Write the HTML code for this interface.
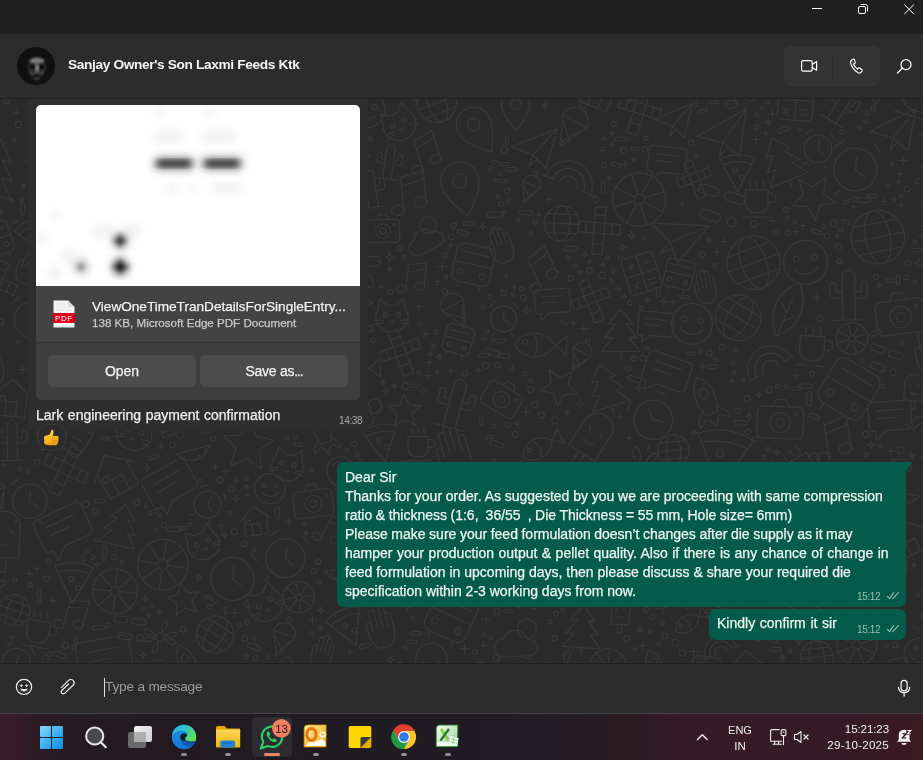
<!DOCTYPE html>
<html><head><meta charset="utf-8">
<style>
*{box-sizing:border-box;margin:0;padding:0}
html,body{width:923px;height:760px;overflow:hidden;background:#232323;font-family:"Liberation Sans",sans-serif;color:#fff}
.abs{position:absolute}
.name,.msg,.time,#composer~div,.tx{will-change:transform}
#title{left:0;top:0;width:923px;height:34px;background:#202020}
#header{left:0;top:34px;width:923px;height:64px;background:#2c2c2c}
#hline{left:0;top:98px;width:923px;height:1px;background:#202020}
#chat{left:0;top:99px;width:923px;height:564px;background:#2a2a2a;overflow:hidden}
#compline{left:0;top:663px;width:923px;height:1px;background:#1f1f1f}
#composer{left:0;top:664px;width:923px;height:49px;background:#2c2c2c}
#tbline{left:0;top:713px;width:923px;height:1px;background:#454347}
#taskbar{left:0;top:714px;width:923px;height:46px;background:linear-gradient(90deg,#3c1b28 0px,#2c1c24 40px,#221b21 100px,#1f1b22 450px,#221c24 560px,#2b1c22 620px,#361a26 680px,#361a25 850px,#3a1a23 923px)}
.name{left:68px;top:57px;font-size:13px;font-weight:700;color:#f4f4f4;white-space:nowrap}
.callgrp{left:784px;top:46px;width:96px;height:40px;border-radius:6px;background:#333333}
.divv{left:832px;top:54px;width:1px;height:24px;background:#2a2a2a}
.msg{will-change:transform;-webkit-text-stroke:0.25px currentColor;font-size:14px;line-height:19px;color:#f2f2f2;white-space:nowrap}
.time{will-change:transform;font-size:10px;letter-spacing:-0.35px;color:#9dbdb3;white-space:nowrap}
</style></head>
<body>
<div id="title" class="abs">
  <svg class="abs" style="left:0;top:0" width="923" height="34">
    <line x1="812" y1="8.5" x2="822" y2="8.5" stroke="#fff" stroke-width="1"/>
    <rect x="858.5" y="6.5" width="7" height="7" rx="1.5" fill="none" stroke="#fff" stroke-width="1"/>
    <path d="M860.5 4.5h5a2 2 0 0 1 2 2v5" fill="none" stroke="#fff" stroke-width="1"/>
    <path d="M904.3 4.6l9.6 9.4M913.9 4.6l-9.6 9.4" stroke="#fff" stroke-width="1"/>
  </svg>
</div>
<div id="header" class="abs">
  <svg class="abs" style="left:17px;top:13px" width="38" height="38" viewBox="0 0 38 38">
    <defs>
      <clipPath id="avc"><circle cx="19" cy="19" r="19"/></clipPath>
      <filter id="sb" x="-20%" y="-20%" width="140%" height="140%"><feGaussianBlur stdDeviation="1.1"/></filter>
    </defs>
    <circle cx="19" cy="19" r="19" fill="#101010"/>
    <g clip-path="url(#avc)" filter="url(#sb)">
      <ellipse cx="19.5" cy="21" rx="8.5" ry="11.5" fill="#262626"/>
      <ellipse cx="20" cy="13.6" rx="7.5" ry="2.6" fill="#7a7a7a"/>
      <ellipse cx="15.8" cy="19.8" rx="4.2" ry="3.6" fill="#0b0b0b" stroke="#3e3e3e" stroke-width="1.1"/>
      <ellipse cx="24.4" cy="19.8" rx="4.2" ry="3.6" fill="#0b0b0b" stroke="#3e3e3e" stroke-width="1.1"/>
      <path d="M20.1 17.5 L20.1 24.5" stroke="#a0a0a0" stroke-width="2"/>
      <path d="M13 24 q2 3 3 4 M27 24 q-2 3 -3 4" stroke="#5a5a5a" stroke-width="1.2" fill="none"/>
      <path d="M16 26.5 Q20 25 24 26.5" stroke="#6a6a6a" stroke-width="1" fill="none"/>
      <ellipse cx="20" cy="29" rx="4.5" ry="2.8" fill="#141414"/>
      <path d="M17.5 31.6 Q20 32.6 22.5 31.6" stroke="#5a5a5a" stroke-width="1.1" fill="none"/>
    </g>
  </svg>
  <div class="abs name" style="top:23px;font-size:13.7px;letter-spacing:-0.36px">Sanjay Owner's Son Laxmi Feeds Ktk</div>
</div>
<div class="abs callgrp"></div>
<div class="abs divv"></div>
<svg class="abs" style="left:790px;top:50px" width="130" height="32" viewBox="790 50 130 32">
  <rect x="801.6" y="60.6" width="10.6" height="10.6" rx="1.5" fill="none" stroke="#fff" stroke-width="1.2"/>
  <path d="M812.2 64.6 L816.6 61.6 V70.2 L812.2 67.4" fill="none" stroke="#fff" stroke-width="1.2" stroke-linejoin="round"/>
  <g transform="translate(856 66) scale(0.88) translate(-856 -66)"><path d="M852.3 58.6 c-1.6 0.5 -2.6 1.6 -2.4 3.4 c0.6 4.4 4.2 9.6 8.5 11.6 c1.4 0.7 3.1 0.3 3.9 -1.1 l0.6 -1 c0.3 -0.6 0.1 -1.2 -0.4 -1.6 l-2.2 -1.6 c-0.5 -0.4 -1.2 -0.3 -1.6 0.2 l-0.9 1 c-2.1 -1.2 -3.8 -3.5 -4.6 -5.8 l1.2 -0.6 c0.6 -0.3 0.9 -0.9 0.7 -1.5 l-0.8 -2.6 c-0.2 -0.6 -0.9 -0.9 -1.5 -0.7z" fill="none" stroke="#fff" stroke-width="1.35" stroke-linejoin="round"/></g>
  <circle cx="906" cy="64.6" r="5" fill="none" stroke="#fff" stroke-width="1.2"/>
  <path d="M902.4 68.2 L897.5 73" stroke="#fff" stroke-width="1.3" stroke-linecap="round"/>
</svg>
<div id="hline" class="abs"></div>
<div id="chat" class="abs"></div>
<!--PATTERN--><svg class="abs" style="left:0;top:99px" width="923" height="564" viewBox="0 0 923 564"><g fill="none" stroke="#373737" stroke-width="1.25" stroke-linecap="round" stroke-linejoin="round"><g transform="translate(519.1 538.2) rotate(-3) scale(1.36) translate(-20 -20)" stroke-width="0.95"><circle cx="26" cy="14" r="7"/><path d="M8 34a7 7 0 0 1 1-14 9 9 0 0 1 17 2 6 6 0 0 1 2 12z"/></g><g transform="translate(162.9 465.6) rotate(9) scale(1.68) translate(-20 -20)" stroke-width="0.77"><circle cx="20" cy="20" r="15"/><circle cx="20" cy="20" r="3"/><path d="M20 5v12M20 23v12M5 20h12M23 20h12M9 9l9 9M22 22l9 9M31 9l-9 9M18 22l-9 9"/></g><g transform="translate(70.6 163.3) rotate(3) scale(1.63) translate(-20 -20)" stroke-width="0.80"><path d="M4 20c6-9 18-11 26 0-8 11-20 9-26 0zM30 20l7-6v12z"/><circle cx="11" cy="18" r="1.5"/><path d="M17 14c2 4 2 8 0 12"/></g><g transform="translate(591.0 339.6) rotate(33) scale(1.71) translate(-20 -20)" stroke-width="0.76"><path d="M11 30V13a9 9 0 0 1 18 0v17zM18 30v8h4v-8M15 14l2 2M23 14l2 2M17 22c2 2 4 2 6 0"/></g><g transform="translate(572.8 75.1) rotate(23) scale(1.52) translate(-20 -20)" stroke-width="0.85"><path d="M4 28a16 16 0 0 1 32 0M9 28a11 11 0 0 1 22 0M14 28a6 6 0 0 1 12 0"/><path d="M2 28h8M30 28h8"/></g><g transform="translate(14.3 511.3) rotate(19) scale(1.05) translate(-20 -20)" stroke-width="1.24"><circle cx="20" cy="20" r="15"/><ellipse cx="20" cy="20" rx="7" ry="15"/><path d="M5 20h30M8 12h24M8 28h24"/></g><g transform="translate(263.3 -17.2) rotate(-3) scale(1.19) translate(-20 -20)" stroke-width="1.10"><path d="M4 20c6-9 18-11 26 0-8 11-20 9-26 0zM30 20l7-6v12z"/><circle cx="11" cy="18" r="1.5"/><path d="M17 14c2 4 2 8 0 12"/></g><g transform="translate(940.7 581.4) rotate(15) scale(1.22) translate(-20 -20)" stroke-width="1.06"><path d="M4 20c6-9 18-11 26 0-8 11-20 9-26 0zM30 20l7-6v12z"/><circle cx="11" cy="18" r="1.5"/><path d="M17 14c2 4 2 8 0 12"/></g><g transform="translate(201.2 154.6) rotate(4) scale(1.25) translate(-20 -20)" stroke-width="1.04"><path d="M16 36V8a4 4 0 0 1 8 0v28M16 22h-5a3 3 0 0 1-3-3v-5a2 2 0 0 1 4 0v4h4M24 18h4v-4a2 2 0 0 1 4 0v5a3 3 0 0 1-3 3h-5M10 36h20"/></g><g transform="translate(-3.7 393.7) rotate(-20) scale(1.05) translate(-20 -20)" stroke-width="1.23"><path d="M11 18a9 9 0 0 1 18 0zM11 18l9 19 9-19M14 22l10 10M26 22l-8 14"/><circle cx="20" cy="6" r="2"/></g><g transform="translate(432.6 572.1) rotate(-6) scale(1.73) translate(-20 -20)" stroke-width="0.75"><path d="M11 30V13a9 9 0 0 1 18 0v17zM18 30v8h4v-8M15 14l2 2M23 14l2 2M17 22c2 2 4 2 6 0"/></g><g transform="translate(171.1 387.6) rotate(-29) scale(1.45) translate(-20 -20)" stroke-width="0.89"><path d="M6 6h28a3 3 0 0 1 3 3v17a3 3 0 0 1-3 3H16l-8 7v-7H6a3 3 0 0 1-3-3V9a3 3 0 0 1 3-3zM10 13h20M10 19h14"/></g><g transform="translate(908.4 437.9) rotate(-26) scale(1.27) translate(-20 -20)" stroke-width="1.03"><path d="M5 19L20 6l15 13M9 16v18h22V16"/><rect x="16" y="23" width="8" height="11"/><rect x="11" y="19" width="4" height="4"/></g><g transform="translate(-9.5 260.8) rotate(-23) scale(1.57) translate(-20 -20)" stroke-width="0.83"><path d="M12 36c-4-3-6-8-6-13v-6a2 2 0 0 1 4 0v5V8a2 2 0 0 1 4 0v12V5a2 2 0 0 1 4 0v15V7a2 2 0 0 1 4 0v14v-8a2 2 0 0 1 4 0v11c0 6-3 10-6 12z"/></g><g transform="translate(410.9 95.2) rotate(-6) scale(1.45) translate(-20 -20)" stroke-width="0.90"><path d="M14 30V8l16-4v22"/><ellipse cx="10" cy="30" rx="4.5" ry="3.5"/><ellipse cx="26" cy="26" rx="4.5" ry="3.5"/><path d="M14 14l16-4"/></g><g transform="translate(360.2 578.0) rotate(-16) scale(1.31) translate(-20 -20)" stroke-width="0.99"><path d="M4 28a16 16 0 0 1 32 0M9 28a11 11 0 0 1 22 0M14 28a6 6 0 0 1 12 0"/><path d="M2 28h8M30 28h8"/></g><g transform="translate(753.7 163.7) rotate(-20) scale(1.78) translate(-20 -20)" stroke-width="0.73"><circle cx="20" cy="20" r="15"/><ellipse cx="20" cy="20" rx="7" ry="15"/><path d="M5 20h30M8 12h24M8 28h24"/></g><g transform="translate(802.8 367.7) rotate(-32) scale(1.32) translate(-20 -20)" stroke-width="0.99"><path d="M8 12h20v12a8 8 0 0 1-8 8h-4a8 8 0 0 1-8-8zM28 15h3a4 4 0 0 1 0 8h-3M12 4c-2 2 2 4 0 6M18 4c-2 2 2 4 0 6M24 4c-2 2 2 4 0 6M6 36h24"/></g><g transform="translate(405.2 -14.2) rotate(23) scale(1.12) translate(-20 -20)" stroke-width="1.16"><path d="M6 6h28a3 3 0 0 1 3 3v17a3 3 0 0 1-3 3H16l-8 7v-7H6a3 3 0 0 1-3-3V9a3 3 0 0 1 3-3zM10 13h20M10 19h14"/></g><g transform="translate(51.5 106.1) rotate(-34) scale(1.31) translate(-20 -20)" stroke-width="0.99"><circle cx="20" cy="22" r="13"/><path d="M20 14v8l6 4M6 10l5-5M34 10l-5-5M12 36l-3 3M28 36l3 3"/></g><g transform="translate(781.6 62.0) rotate(-22) scale(1.47) translate(-20 -20)" stroke-width="0.88"><path d="M20 3l-9 11h5l-8 10h6l-8 10h28l-8-10h6l-8-10h5zM20 34v5"/></g><g transform="translate(854.8 474.0) rotate(16) scale(1.12) translate(-20 -20)" stroke-width="1.16"><circle cx="20" cy="22" r="13"/><path d="M20 14v8l6 4M6 10l5-5M34 10l-5-5M12 36l-3 3M28 36l3 3"/></g><g transform="translate(353.8 271.4) rotate(-5) scale(1.55) translate(-20 -20)" stroke-width="0.84"><path d="M4 20c6-9 18-11 26 0-8 11-20 9-26 0zM30 20l7-6v12z"/><circle cx="11" cy="18" r="1.5"/><path d="M17 14c2 4 2 8 0 12"/></g><g transform="translate(17.3 561.5) rotate(17) scale(1.08) translate(-20 -20)" stroke-width="1.20"><circle cx="20" cy="22" r="13"/><path d="M20 14v8l6 4M6 10l5-5M34 10l-5-5M12 36l-3 3M28 36l3 3"/></g><g transform="translate(385.2 526.5) rotate(-14) scale(1.31) translate(-20 -20)" stroke-width="0.99"><path d="M12 36c-4-3-6-8-6-13v-6a2 2 0 0 1 4 0v5V8a2 2 0 0 1 4 0v12V5a2 2 0 0 1 4 0v15V7a2 2 0 0 1 4 0v14v-8a2 2 0 0 1 4 0v11c0 6-3 10-6 12z"/></g><g transform="translate(673.7 21.5) rotate(-1) scale(1.14) translate(-20 -20)" stroke-width="1.14"><path d="M3 19L37 5 29 35 19 25zM19 25l-3 9 6-6M19 25L37 5"/></g><g transform="translate(573.1 24.8) rotate(29) scale(1.52) translate(-20 -20)" stroke-width="0.85"><path d="M11 18a9 9 0 0 1 18 0zM11 18l9 19 9-19M14 22l10 10M26 22l-8 14"/><circle cx="20" cy="6" r="2"/></g><g transform="translate(-4.0 142.6) rotate(-18) scale(1.16) translate(-20 -20)" stroke-width="1.12"><rect x="6" y="4" width="28" height="28" rx="5"/><path d="M6 18h28M10 10h20M12 32v4M28 32v4"/><circle cx="12" cy="25" r="2"/><circle cx="28" cy="25" r="2"/></g><g transform="translate(251.5 300.7) rotate(-29) scale(1.04) translate(-20 -20)" stroke-width="1.25"><path d="M14 30V8l16-4v22"/><ellipse cx="10" cy="30" rx="4.5" ry="3.5"/><ellipse cx="26" cy="26" rx="4.5" ry="3.5"/><path d="M14 14l16-4"/></g><g transform="translate(413.7 179.9) rotate(6) scale(1.11) translate(-20 -20)" stroke-width="1.17"><path d="M14 30V8l16-4v22"/><ellipse cx="10" cy="30" rx="4.5" ry="3.5"/><ellipse cx="26" cy="26" rx="4.5" ry="3.5"/><path d="M14 14l16-4"/></g><g transform="translate(12.3 341.4) rotate(-1) scale(1.25) translate(-20 -20)" stroke-width="1.04"><path d="M16 36V8a4 4 0 0 1 8 0v28M16 22h-5a3 3 0 0 1-3-3v-5a2 2 0 0 1 4 0v4h4M24 18h4v-4a2 2 0 0 1 4 0v5a3 3 0 0 1-3 3h-5M10 36h20"/></g><g transform="translate(287.1 583.6) rotate(-3) scale(1.58) translate(-20 -20)" stroke-width="0.82"><path d="M16 36V8a4 4 0 0 1 8 0v28M16 22h-5a3 3 0 0 1-3-3v-5a2 2 0 0 1 4 0v4h4M24 18h4v-4a2 2 0 0 1 4 0v5a3 3 0 0 1-3 3h-5M10 36h20"/></g><g transform="translate(104.8 561.9) rotate(-10) scale(1.59) translate(-20 -20)" stroke-width="0.82"><path d="M6 6h28a3 3 0 0 1 3 3v17a3 3 0 0 1-3 3H16l-8 7v-7H6a3 3 0 0 1-3-3V9a3 3 0 0 1 3-3zM10 13h20M10 19h14"/></g><g transform="translate(741.3 501.5) rotate(9) scale(1.33) translate(-20 -20)" stroke-width="0.97"><path d="M4 28a16 16 0 0 1 32 0M9 28a11 11 0 0 1 22 0M14 28a6 6 0 0 1 12 0"/><path d="M2 28h8M30 28h8"/></g><g transform="translate(541.1 347.8) rotate(-29) scale(1.31) translate(-20 -20)" stroke-width="1.00"><path d="M4 20c6-9 18-11 26 0-8 11-20 9-26 0zM30 20l7-6v12z"/><circle cx="11" cy="18" r="1.5"/><path d="M17 14c2 4 2 8 0 12"/></g><g transform="translate(227.7 231.4) rotate(-8) scale(1.09) translate(-20 -20)" stroke-width="1.19"><path d="M6 6h28a3 3 0 0 1 3 3v17a3 3 0 0 1-3 3H16l-8 7v-7H6a3 3 0 0 1-3-3V9a3 3 0 0 1 3-3zM10 13h20M10 19h14"/></g><g transform="translate(539.5 246.1) rotate(1) scale(1.59) translate(-20 -20)" stroke-width="0.82"><path d="M4 20c6-9 18-11 26 0-8 11-20 9-26 0zM30 20l7-6v12z"/><circle cx="11" cy="18" r="1.5"/><path d="M17 14c2 4 2 8 0 12"/></g><g transform="translate(278.8 33.0) rotate(-19) scale(1.41) translate(-20 -20)" stroke-width="0.92"><circle cx="20" cy="20" r="15"/><ellipse cx="20" cy="20" rx="7" ry="15"/><path d="M5 20h30M8 12h24M8 28h24"/></g><g transform="translate(458.9 351.2) rotate(-17) scale(1.56) translate(-20 -20)" stroke-width="0.83"><path d="M12 36c-4-3-6-8-6-13v-6a2 2 0 0 1 4 0v5V8a2 2 0 0 1 4 0v12V5a2 2 0 0 1 4 0v15V7a2 2 0 0 1 4 0v14v-8a2 2 0 0 1 4 0v11c0 6-3 10-6 12z"/></g><g transform="translate(269.9 389.6) rotate(1) scale(1.01) translate(-20 -20)" stroke-width="1.29"><circle cx="20" cy="20" r="15"/><circle cx="14" cy="17" r="2"/><circle cx="26" cy="17" r="2"/><path d="M12 24c4 5 12 5 16 0"/></g><g transform="translate(590.7 465.4) rotate(27) scale(1.20) translate(-20 -20)" stroke-width="1.08"><circle cx="20" cy="20" r="15"/><circle cx="14" cy="17" r="2"/><circle cx="26" cy="17" r="2"/><path d="M12 24c4 5 12 5 16 0"/></g><g transform="translate(541.5 171.2) rotate(-26) scale(1.31) translate(-20 -20)" stroke-width="0.99"><path d="M14 30V8l16-4v22"/><ellipse cx="10" cy="30" rx="4.5" ry="3.5"/><ellipse cx="26" cy="26" rx="4.5" ry="3.5"/><path d="M14 14l16-4"/></g><g transform="translate(842.5 4.5) rotate(32) scale(1.28) translate(-20 -20)" stroke-width="1.02"><path d="M16 36V8a4 4 0 0 1 8 0v28M16 22h-5a3 3 0 0 1-3-3v-5a2 2 0 0 1 4 0v4h4M24 18h4v-4a2 2 0 0 1 4 0v5a3 3 0 0 1-3 3h-5M10 36h20"/></g><g transform="translate(142.9 252.2) rotate(30) scale(1.22) translate(-20 -20)" stroke-width="1.06"><path d="M20 4l4.5 10 10.5 1-8 7 2.5 11L20 27.5 10.5 33 13 22l-8-7 10.5-1z"/></g><g transform="translate(669.8 488.5) rotate(-13) scale(1.54) translate(-20 -20)" stroke-width="0.85"><rect x="6" y="4" width="28" height="28" rx="5"/><path d="M6 18h28M10 10h20M12 32v4M28 32v4"/><circle cx="12" cy="25" r="2"/><circle cx="28" cy="25" r="2"/></g><g transform="translate(247.8 347.0) rotate(5) scale(1.66) translate(-20 -20)" stroke-width="0.78"><path d="M20 4l4.5 10 10.5 1-8 7 2.5 11L20 27.5 10.5 33 13 22l-8-7 10.5-1z"/></g><g transform="translate(742.2 -8.5) rotate(-7) scale(1.25) translate(-20 -20)" stroke-width="1.04"><path d="M14 30V8l16-4v22"/><ellipse cx="10" cy="30" rx="4.5" ry="3.5"/><ellipse cx="26" cy="26" rx="4.5" ry="3.5"/><path d="M14 14l16-4"/></g><g transform="translate(747.4 574.3) rotate(-4) scale(1.62) translate(-20 -20)" stroke-width="0.80"><path d="M5 19L20 6l15 13M9 16v18h22V16"/><rect x="16" y="23" width="8" height="11"/><rect x="11" y="19" width="4" height="4"/></g><g transform="translate(639.2 100.4) rotate(-17) scale(1.77) translate(-20 -20)" stroke-width="0.74"><circle cx="20" cy="20" r="15"/><circle cx="20" cy="20" r="3"/><path d="M20 5v12M20 23v12M5 20h12M23 20h12M9 9l9 9M22 22l9 9M31 9l-9 9M18 22l-9 9"/></g><g transform="translate(707.1 303.0) rotate(-22) scale(1.57) translate(-20 -20)" stroke-width="0.83"><path d="M20 3c7 6 8 16 4 25h-8c-4-9-3-19 4-25z"/><circle cx="20" cy="14" r="3"/><path d="M16 24l-6 6v4l6-4M24 24l6 6v4l-6-4M17 31l3 6 3-6"/></g><g transform="translate(312.9 401.2) rotate(-7) scale(1.22) translate(-20 -20)" stroke-width="1.07"><rect x="4" y="12" width="32" height="22" rx="4"/><circle cx="20" cy="23" r="7"/><circle cx="20" cy="23" r="3"/><path d="M14 12l3-5h6l3 5"/><circle cx="31" cy="17" r="1"/></g><g transform="translate(582.4 529.6) rotate(4) scale(1.36) translate(-20 -20)" stroke-width="0.95"><path d="M20 3l-9 11h5l-8 10h6l-8 10h28l-8-10h6l-8-10h5zM20 34v5"/></g><g transform="translate(464.1 474.9) rotate(-3) scale(1.52) translate(-20 -20)" stroke-width="0.85"><path d="M6 6h28a3 3 0 0 1 3 3v17a3 3 0 0 1-3 3H16l-8 7v-7H6a3 3 0 0 1-3-3V9a3 3 0 0 1 3-3zM10 13h20M10 19h14"/></g><g transform="translate(597.9 413.5) rotate(-18) scale(1.65) translate(-20 -20)" stroke-width="0.79"><path d="M11 18a9 9 0 0 1 18 0zM11 18l9 19 9-19M14 22l10 10M26 22l-8 14"/><circle cx="20" cy="6" r="2"/></g><g transform="translate(877.8 138.2) rotate(-11) scale(1.78) translate(-20 -20)" stroke-width="0.73"><circle cx="20" cy="20" r="15"/><ellipse cx="20" cy="20" rx="7" ry="15"/><path d="M5 20h30M8 12h24M8 28h24"/></g><g transform="translate(404.6 312.4) rotate(-1) scale(1.07) translate(-20 -20)" stroke-width="1.22"><path d="M20 4l4.5 10 10.5 1-8 7 2.5 11L20 27.5 10.5 33 13 22l-8-7 10.5-1z"/></g><g transform="translate(146.5 182.3) rotate(-2) scale(1.64) translate(-20 -20)" stroke-width="0.79"><path d="M14 30V8l16-4v22"/><ellipse cx="10" cy="30" rx="4.5" ry="3.5"/><ellipse cx="26" cy="26" rx="4.5" ry="3.5"/><path d="M14 14l16-4"/></g><g transform="translate(847.2 293.0) rotate(31) scale(1.80) translate(-20 -20)" stroke-width="0.72"><rect x="6" y="4" width="28" height="28" rx="5"/><path d="M6 18h28M10 10h20M12 32v4M28 32v4"/><circle cx="12" cy="25" r="2"/><circle cx="28" cy="25" r="2"/></g><g transform="translate(894.0 32.0) rotate(-4) scale(1.39) translate(-20 -20)" stroke-width="0.93"><path d="M3 19L37 5 29 35 19 25zM19 25l-3 9 6-6M19 25L37 5"/></g><g transform="translate(780.4 319.2) rotate(2) scale(1.45) translate(-20 -20)" stroke-width="0.90"><rect x="4" y="12" width="32" height="22" rx="4"/><circle cx="20" cy="23" r="7"/><circle cx="20" cy="23" r="3"/><path d="M14 12l3-5h6l3 5"/><circle cx="31" cy="17" r="1"/></g><g transform="translate(794.0 523.9) rotate(-14) scale(1.30) translate(-20 -20)" stroke-width="1.00"><path d="M11 18a9 9 0 0 1 18 0zM11 18l9 19 9-19M14 22l10 10M26 22l-8 14"/><circle cx="20" cy="6" r="2"/></g><g transform="translate(504.6 144.9) rotate(-21) scale(1.11) translate(-20 -20)" stroke-width="1.17"><path d="M12 36c-4-3-6-8-6-13v-6a2 2 0 0 1 4 0v5V8a2 2 0 0 1 4 0v12V5a2 2 0 0 1 4 0v15V7a2 2 0 0 1 4 0v14v-8a2 2 0 0 1 4 0v11c0 6-3 10-6 12z"/></g><g transform="translate(913.5 291.7) rotate(3) scale(1.02) translate(-20 -20)" stroke-width="1.27"><path d="M11 30V13a9 9 0 0 1 18 0v17zM18 30v8h4v-8M15 14l2 2M23 14l2 2M17 22c2 2 4 2 6 0"/></g><g transform="translate(97.4 36.3) rotate(-30) scale(1.79) translate(-20 -20)" stroke-width="0.73"><rect x="4" y="12" width="32" height="22" rx="4"/><circle cx="20" cy="23" r="7"/><circle cx="20" cy="23" r="3"/><path d="M14 12l3-5h6l3 5"/><circle cx="31" cy="17" r="1"/></g><g transform="translate(397.6 472.7) rotate(2) scale(1.10) translate(-20 -20)" stroke-width="1.18"><circle cx="20" cy="20" r="15"/><circle cx="20" cy="20" r="3"/><path d="M20 5v12M20 23v12M5 20h12M23 20h12M9 9l9 9M22 22l9 9M31 9l-9 9M18 22l-9 9"/></g><g transform="translate(656.1 570.3) rotate(-21) scale(1.21) translate(-20 -20)" stroke-width="1.08"><path d="M20 3c7 6 8 16 4 25h-8c-4-9-3-19 4-25z"/><circle cx="20" cy="14" r="3"/><path d="M16 24l-6 6v4l6-4M24 24l6 6v4l-6-4M17 31l3 6 3-6"/></g><g transform="translate(641.6 174.5) rotate(-18) scale(1.18) translate(-20 -20)" stroke-width="1.10"><rect x="6" y="4" width="28" height="32" rx="4"/><path d="M20 4v32M6 20h28M10 12h6M13 9v6M24 12h6M10 27l5 5M15 27l-5 5M24 27h6M24 31h6"/></g><g transform="translate(188.2 307.9) rotate(-19) scale(1.17) translate(-20 -20)" stroke-width="1.11"><path d="M14 30V8l16-4v22"/><ellipse cx="10" cy="30" rx="4.5" ry="3.5"/><ellipse cx="26" cy="26" rx="4.5" ry="3.5"/><path d="M14 14l16-4"/></g><g transform="translate(283.3 537.4) rotate(19) scale(1.25) translate(-20 -20)" stroke-width="1.04"><path d="M11 18a9 9 0 0 1 18 0zM11 18l9 19 9-19M14 22l10 10M26 22l-8 14"/><circle cx="20" cy="6" r="2"/></g><g transform="translate(73.3 516.9) rotate(16) scale(1.16) translate(-20 -20)" stroke-width="1.12"><path d="M14 30V8l16-4v22"/><ellipse cx="10" cy="30" rx="4.5" ry="3.5"/><ellipse cx="26" cy="26" rx="4.5" ry="3.5"/><path d="M14 14l16-4"/></g><g transform="translate(73.4 482.6) rotate(3) scale(1.21) translate(-20 -20)" stroke-width="1.08"><path d="M4 8c10-5 22-5 32 0L20 38zM7 13c8-3 18-3 26 0"/><circle cx="18" cy="18" r="2"/><circle cx="24" cy="25" r="2"/></g><g transform="translate(72.5 324.2) rotate(29) scale(1.64) translate(-20 -20)" stroke-width="0.79"><rect x="6" y="4" width="28" height="32" rx="4"/><path d="M20 4v32M6 20h28M10 12h6M13 9v6M24 12h6M10 27l5 5M15 27l-5 5M24 27h6M24 31h6"/></g><g transform="translate(47.9 44.1) rotate(18) scale(1.15) translate(-20 -20)" stroke-width="1.13"><path d="M20 3c7 6 8 16 4 25h-8c-4-9-3-19 4-25z"/><circle cx="20" cy="14" r="3"/><path d="M16 24l-6 6v4l6-4M24 24l6 6v4l-6-4M17 31l3 6 3-6"/></g><g transform="translate(90.7 84.2) rotate(34) scale(1.15) translate(-20 -20)" stroke-width="1.13"><rect x="4" y="12" width="32" height="22" rx="4"/><circle cx="20" cy="23" r="7"/><circle cx="20" cy="23" r="3"/><path d="M14 12l3-5h6l3 5"/><circle cx="31" cy="17" r="1"/></g><g transform="translate(692.0 224.8) rotate(7) scale(1.36) translate(-20 -20)" stroke-width="0.95"><circle cx="20" cy="20" r="15"/><circle cx="14" cy="17" r="2"/><circle cx="26" cy="17" r="2"/><path d="M12 24c4 5 12 5 16 0"/></g><g transform="translate(297.7 305.5) rotate(19) scale(1.11) translate(-20 -20)" stroke-width="1.17"><path d="M20 37c-7-9-11-15-11-21a11 11 0 0 1 22 0c0 6-4 12-11 21z"/><circle cx="20" cy="16" r="4"/></g><g transform="translate(370.7 416.5) rotate(21) scale(1.61) translate(-20 -20)" stroke-width="0.81"><path d="M16 36V8a4 4 0 0 1 8 0v28M16 22h-5a3 3 0 0 1-3-3v-5a2 2 0 0 1 4 0v4h4M24 18h4v-4a2 2 0 0 1 4 0v5a3 3 0 0 1-3 3h-5M10 36h20"/></g><g transform="translate(371.1 89.9) rotate(-8) scale(1.17) translate(-20 -20)" stroke-width="1.11"><path d="M16 36V8a4 4 0 0 1 8 0v28M16 22h-5a3 3 0 0 1-3-3v-5a2 2 0 0 1 4 0v4h4M24 18h4v-4a2 2 0 0 1 4 0v5a3 3 0 0 1-3 3h-5M10 36h20"/></g><g transform="translate(923.8 -6.2) rotate(17) scale(1.61) translate(-20 -20)" stroke-width="0.81"><path d="M8 12h20v12a8 8 0 0 1-8 8h-4a8 8 0 0 1-8-8zM28 15h3a4 4 0 0 1 0 8h-3M12 4c-2 2 2 4 0 6M18 4c-2 2 2 4 0 6M24 4c-2 2 2 4 0 6M6 36h24"/></g><g transform="translate(366.7 10.5) rotate(10) scale(1.21) translate(-20 -20)" stroke-width="1.08"><circle cx="20" cy="20" r="15"/><circle cx="14" cy="17" r="2"/><circle cx="26" cy="17" r="2"/><path d="M12 24c4 5 12 5 16 0"/></g><g transform="translate(900.0 213.4) rotate(-8) scale(1.53) translate(-20 -20)" stroke-width="0.85"><rect x="4" y="12" width="32" height="22" rx="4"/><circle cx="20" cy="23" r="7"/><circle cx="20" cy="23" r="3"/><path d="M14 12l3-5h6l3 5"/><circle cx="31" cy="17" r="1"/></g><g transform="translate(363.8 168.7) rotate(-1) scale(1.23) translate(-20 -20)" stroke-width="1.06"><path d="M8 36v-8c-4-2-5-8-2-11l4-3V8a6 6 0 0 1 12 0v3h8a4 4 0 0 1 0 8h-8v5c4 2 6 6 6 12M12 36h4M22 36h4"/><circle cx="16" cy="8" r="1"/><path d="M30 15h4"/></g><g transform="translate(875.1 380.8) rotate(-33) scale(1.22) translate(-20 -20)" stroke-width="1.07"><path d="M8 36v-8c-4-2-5-8-2-11l4-3V8a6 6 0 0 1 12 0v3h8a4 4 0 0 1 0 8h-8v5c4 2 6 6 6 12M12 36h4M22 36h4"/><circle cx="16" cy="8" r="1"/><path d="M30 15h4"/></g><g transform="translate(639.0 11.9) rotate(17) scale(1.33) translate(-20 -20)" stroke-width="0.98"><path d="M4 14h32v8H4zM16 2v36h8V2zM10 14v8M30 14v8M16 8h8M16 30h8"/></g><g transform="translate(852.0 239.4) rotate(-17) scale(1.06) translate(-20 -20)" stroke-width="1.23"><circle cx="20" cy="20" r="15"/><circle cx="20" cy="20" r="3"/><path d="M20 5v12M20 23v12M5 20h12M23 20h12M9 9l9 9M22 22l9 9M31 9l-9 9M18 22l-9 9"/></g><g transform="translate(855.8 67.2) rotate(7) scale(1.65) translate(-20 -20)" stroke-width="0.79"><circle cx="20" cy="22" r="13"/><path d="M20 14v8l6 4M6 10l5-5M34 10l-5-5M12 36l-3 3M28 36l3 3"/></g><g transform="translate(581.2 255.2) rotate(25) scale(1.09) translate(-20 -20)" stroke-width="1.19"><path d="M11 18a9 9 0 0 1 18 0zM11 18l9 19 9-19M14 22l10 10M26 22l-8 14"/><circle cx="20" cy="6" r="2"/></g><g transform="translate(381.5 343.0) rotate(-10) scale(1.11) translate(-20 -20)" stroke-width="1.17"><path d="M4 8c10-5 22-5 32 0L20 38zM7 13c8-3 18-3 26 0"/><circle cx="18" cy="18" r="2"/><circle cx="24" cy="25" r="2"/></g><g transform="translate(104.1 270.6) rotate(20) scale(1.23) translate(-20 -20)" stroke-width="1.06"><path d="M20 4c7 0 11 5 11 11 0 8-6 13-11 14-5-1-11-6-11-14 0-6 4-11 11-11zM20 29l-2 3h4zM20 32c-3 3 3 5 0 8"/><path d="M14 12c1-3 3-4 5-4"/></g><g transform="translate(325.9 144.0) rotate(9) scale(1.50) translate(-20 -20)" stroke-width="0.87"><circle cx="20" cy="20" r="15"/><circle cx="14" cy="17" r="2"/><circle cx="26" cy="17" r="2"/><path d="M12 24c4 5 12 5 16 0"/></g><g transform="translate(162.8 130.4) rotate(27) scale(1.60) translate(-20 -20)" stroke-width="0.81"><circle cx="20" cy="20" r="15"/><circle cx="14" cy="17" r="2"/><circle cx="26" cy="17" r="2"/><path d="M12 24c4 5 12 5 16 0"/></g><g transform="translate(720.3 108.8) rotate(17) scale(1.50) translate(-20 -20)" stroke-width="0.87"><rect x="2" y="8" width="14" height="6" rx="3"/><rect x="20" y="8" width="14" height="6" rx="3"/><rect x="8" y="24" width="14" height="6" rx="3"/><circle cx="30" cy="27" r="3"/></g><g transform="translate(765.1 260.0) rotate(-30) scale(1.45) translate(-20 -20)" stroke-width="0.89"><path d="M4 28a16 16 0 0 1 32 0M9 28a11 11 0 0 1 22 0M14 28a6 6 0 0 1 12 0"/><path d="M2 28h8M30 28h8"/></g><g transform="translate(678.2 399.2) rotate(27) scale(1.24) translate(-20 -20)" stroke-width="1.05"><path d="M8 36v-8c-4-2-5-8-2-11l4-3V8a6 6 0 0 1 12 0v3h8a4 4 0 0 1 0 8h-8v5c4 2 6 6 6 12M12 36h4M22 36h4"/><circle cx="16" cy="8" r="1"/><path d="M30 15h4"/></g><g transform="translate(290.5 246.4) rotate(-4) scale(1.73) translate(-20 -20)" stroke-width="0.75"><path d="M20 4l4.5 10 10.5 1-8 7 2.5 11L20 27.5 10.5 33 13 22l-8-7 10.5-1z"/></g><g transform="translate(273.5 171.8) rotate(33) scale(1.64) translate(-20 -20)" stroke-width="0.79"><path d="M11 30V13a9 9 0 0 1 18 0v17zM18 30v8h4v-8M15 14l2 2M23 14l2 2M17 22c2 2 4 2 6 0"/></g><g transform="translate(477.1 30.9) rotate(-33) scale(1.58) translate(-20 -20)" stroke-width="0.82"><path d="M20 37c-7-9-11-15-11-21a11 11 0 0 1 22 0c0 6-4 12-11 21z"/><circle cx="20" cy="16" r="4"/></g><g transform="translate(543.2 460.9) rotate(21) scale(1.54) translate(-20 -20)" stroke-width="0.84"><path d="M20 37c-7-9-11-15-11-21a11 11 0 0 1 22 0c0 6-4 12-11 21z"/><circle cx="20" cy="16" r="4"/></g><g transform="translate(689.8 523.0) rotate(-33) scale(1.07) translate(-20 -20)" stroke-width="1.22"><path d="M4 20c6-9 18-11 26 0-8 11-20 9-26 0zM30 20l7-6v12z"/><circle cx="11" cy="18" r="1.5"/><path d="M17 14c2 4 2 8 0 12"/></g><g transform="translate(665.9 275.4) rotate(19) scale(1.34) translate(-20 -20)" stroke-width="0.97"><path d="M6 6h28a3 3 0 0 1 3 3v17a3 3 0 0 1-3 3H16l-8 7v-7H6a3 3 0 0 1-3-3V9a3 3 0 0 1 3-3zM10 13h20M10 19h14"/></g><g transform="translate(455.4 304.6) rotate(15) scale(1.54) translate(-20 -20)" stroke-width="0.85"><path d="M16 36V8a4 4 0 0 1 8 0v28M16 22h-5a3 3 0 0 1-3-3v-5a2 2 0 0 1 4 0v4h4M24 18h4v-4a2 2 0 0 1 4 0v5a3 3 0 0 1-3 3h-5M10 36h20"/></g><g transform="translate(801.9 466.8) rotate(27) scale(1.53) translate(-20 -20)" stroke-width="0.85"><path d="M4 20c6-9 18-11 26 0-8 11-20 9-26 0zM30 20l7-6v12z"/><circle cx="11" cy="18" r="1.5"/><path d="M17 14c2 4 2 8 0 12"/></g><g transform="translate(120.8 427.7) rotate(13) scale(1.34) translate(-20 -20)" stroke-width="0.97"><path d="M20 3l-9 11h5l-8 10h6l-8 10h28l-8-10h6l-8-10h5zM20 34v5"/></g><g transform="translate(857.0 546.2) rotate(25) scale(1.32) translate(-20 -20)" stroke-width="0.98"><circle cx="20" cy="20" r="15"/><circle cx="20" cy="20" r="3"/><path d="M20 5v12M20 23v12M5 20h12M23 20h12M9 9l9 9M22 22l9 9M31 9l-9 9M18 22l-9 9"/></g><g transform="translate(723.1 35.8) rotate(-7) scale(1.53) translate(-20 -20)" stroke-width="0.85"><path d="M3 19L37 5 29 35 19 25zM19 25l-3 9 6-6M19 25L37 5"/></g><g transform="translate(745.3 447.6) rotate(11) scale(1.78) translate(-20 -20)" stroke-width="0.73"><path d="M7 14l2-10 7 6h8l7-6 2 10c3 4 3 10 0 14-3 5-8 7-13 7s-10-2-13-7c-3-4-3-10 0-14z"/><circle cx="14" cy="19" r="2"/><circle cx="26" cy="19" r="2"/><path d="M18 25l2 2 2-2M4 24h8M4 28l8-2M36 24h-8M36 28l-8-2"/></g><g transform="translate(131.5 74.8) rotate(-25) scale(1.48) translate(-20 -20)" stroke-width="0.88"><path d="M4 14h32v8H4zM16 2v36h8V2zM10 14v8M30 14v8M16 8h8M16 30h8"/></g><g transform="translate(530.7 87.7) rotate(22) scale(1.04) translate(-20 -20)" stroke-width="1.25"><path d="M11 18a9 9 0 0 1 18 0zM11 18l9 19 9-19M14 22l10 10M26 22l-8 14"/><circle cx="20" cy="6" r="2"/></g><g transform="translate(805.6 163.4) rotate(-6) scale(1.47) translate(-20 -20)" stroke-width="0.88"><circle cx="20" cy="20" r="15"/><circle cx="14" cy="17" r="2"/><circle cx="26" cy="17" r="2"/><path d="M12 24c4 5 12 5 16 0"/></g><g transform="translate(503.3 297.5) rotate(31) scale(1.17) translate(-20 -20)" stroke-width="1.11"><rect x="4" y="12" width="32" height="22" rx="4"/><circle cx="20" cy="23" r="7"/><circle cx="20" cy="23" r="3"/><path d="M14 12l3-5h6l3 5"/><circle cx="31" cy="17" r="1"/></g><g transform="translate(940.4 383.0) rotate(-10) scale(1.45) translate(-20 -20)" stroke-width="0.90"><path d="M16 36V8a4 4 0 0 1 8 0v28M16 22h-5a3 3 0 0 1-3-3v-5a2 2 0 0 1 4 0v4h4M24 18h4v-4a2 2 0 0 1 4 0v5a3 3 0 0 1-3 3h-5M10 36h20"/></g><g transform="translate(81.8 218.1) rotate(17) scale(1.55) translate(-20 -20)" stroke-width="0.84"><circle cx="26" cy="14" r="7"/><path d="M8 34a7 7 0 0 1 1-14 9 9 0 0 1 17 2 6 6 0 0 1 2 12z"/></g><g transform="translate(793.3 414.4) rotate(-15) scale(1.68) translate(-20 -20)" stroke-width="0.77"><circle cx="20" cy="20" r="4"/><path d="M20 16c-3-6-3-10 0-12 3 2 3 6 0 12M24 20c6-3 10-3 12 0-2 3-6 3-12 0M20 24c3 6 3 10 0 12-3-2-3-6 0-12M16 20c-6 3-10 3-12 0 2-3 6-3 12 0M23 17c4-5 7-7 10-6 0 3-3 6-10 6M17 23c-4 5-7 7-10 6 0-3 3-6 10-6"/></g><g transform="translate(890.1 319.9) rotate(-4) scale(1.26) translate(-20 -20)" stroke-width="1.03"><path d="M6 6h28a3 3 0 0 1 3 3v17a3 3 0 0 1-3 3H16l-8 7v-7H6a3 3 0 0 1-3-3V9a3 3 0 0 1 3-3zM10 13h20M10 19h14"/></g><g transform="translate(177.9 69.4) rotate(-1) scale(1.11) translate(-20 -20)" stroke-width="1.17"><path d="M20 3l-9 11h5l-8 10h6l-8 10h28l-8-10h6l-8-10h5zM20 34v5"/></g><g transform="translate(285.9 456.4) rotate(11) scale(1.49) translate(-20 -20)" stroke-width="0.87"><circle cx="20" cy="22" r="13"/><path d="M20 14v8l6 4M6 10l5-5M34 10l-5-5M12 36l-3 3M28 36l3 3"/></g><g transform="translate(425.9 54.9) rotate(-18) scale(1.29) translate(-20 -20)" stroke-width="1.01"><path d="M14 30V8l16-4v22"/><ellipse cx="10" cy="30" rx="4.5" ry="3.5"/><ellipse cx="26" cy="26" rx="4.5" ry="3.5"/><path d="M14 14l16-4"/></g><g transform="translate(941.9 63.5) rotate(8) scale(1.74) translate(-20 -20)" stroke-width="0.75"><path d="M20 3l-9 11h5l-8 10h6l-8 10h28l-8-10h6l-8-10h5zM20 34v5"/></g><g transform="translate(11.8 298.8) rotate(5) scale(1.33) translate(-20 -20)" stroke-width="0.98"><path d="M5 19L20 6l15 13M9 16v18h22V16"/><rect x="16" y="23" width="8" height="11"/><rect x="11" y="19" width="4" height="4"/></g><g transform="translate(30.0 399.7) rotate(3) scale(1.32) translate(-20 -20)" stroke-width="0.99"><circle cx="20" cy="22" r="13"/><path d="M20 14v8l6 4M6 10l5-5M34 10l-5-5M12 36l-3 3M28 36l3 3"/></g><g transform="translate(885.5 511.4) rotate(26) scale(1.53) translate(-20 -20)" stroke-width="0.85"><path d="M20 37c-7-9-11-15-11-21a11 11 0 0 1 22 0c0 6-4 12-11 21z"/><circle cx="20" cy="16" r="4"/></g><g transform="translate(323.3 333.6) rotate(-14) scale(1.32) translate(-20 -20)" stroke-width="0.99"><path d="M20 3c7 6 8 16 4 25h-8c-4-9-3-19 4-25z"/><circle cx="20" cy="14" r="3"/><path d="M16 24l-6 6v4l6-4M24 24l6 6v4l-6-4M17 31l3 6 3-6"/></g><g transform="translate(652.1 318.1) rotate(-22) scale(1.51) translate(-20 -20)" stroke-width="0.86"><circle cx="20" cy="22" r="13"/><path d="M20 14v8l6 4M6 10l5-5M34 10l-5-5M12 36l-3 3M28 36l3 3"/></g><g transform="translate(461.4 88.7) rotate(-13) scale(1.74) translate(-20 -20)" stroke-width="0.75"><path d="M20 37c-7-9-11-15-11-21a11 11 0 0 1 22 0c0 6-4 12-11 21z"/><circle cx="20" cy="16" r="4"/></g><g transform="translate(674.9 136.8) rotate(25) scale(1.57) translate(-20 -20)" stroke-width="0.83"><path d="M3 19L37 5 29 35 19 25zM19 25l-3 9 6-6M19 25L37 5"/></g><g transform="translate(231.7 102.3) rotate(5) scale(1.48) translate(-20 -20)" stroke-width="0.88"><path d="M7 14l2-10 7 6h8l7-6 2 10c3 4 3 10 0 14-3 5-8 7-13 7s-10-2-13-7c-3-4-3-10 0-14z"/><circle cx="14" cy="19" r="2"/><circle cx="26" cy="19" r="2"/><path d="M18 25l2 2 2-2M4 24h8M4 28l8-2M36 24h-8M36 28l-8-2"/></g><g transform="translate(457.7 242.5) rotate(16) scale(1.01) translate(-20 -20)" stroke-width="1.28"><rect x="6" y="4" width="28" height="28" rx="5"/><path d="M6 18h28M10 10h20M12 32v4M28 32v4"/><circle cx="12" cy="25" r="2"/><circle cx="28" cy="25" r="2"/></g><g transform="translate(606.0 288.4) rotate(-17) scale(1.40) translate(-20 -20)" stroke-width="0.93"><path d="M20 3l-9 11h5l-8 10h6l-8 10h28l-8-10h6l-8-10h5zM20 34v5"/></g><g transform="translate(188.3 566.2) rotate(-26) scale(1.29) translate(-20 -20)" stroke-width="1.01"><path d="M20 3c7 6 8 16 4 25h-8c-4-9-3-19 4-25z"/><circle cx="20" cy="14" r="3"/><path d="M16 24l-6 6v4l6-4M24 24l6 6v4l-6-4M17 31l3 6 3-6"/></g><g transform="translate(134.5 333.5) rotate(17) scale(1.17) translate(-20 -20)" stroke-width="1.11"><path d="M7 14l2-10 7 6h8l7-6 2 10c3 4 3 10 0 14-3 5-8 7-13 7s-10-2-13-7c-3-4-3-10 0-14z"/><circle cx="14" cy="19" r="2"/><circle cx="26" cy="19" r="2"/><path d="M18 25l2 2 2-2M4 24h8M4 28l8-2M36 24h-8M36 28l-8-2"/></g><g transform="translate(383.0 128.9) rotate(-1) scale(1.04) translate(-20 -20)" stroke-width="1.25"><rect x="4" y="12" width="32" height="22" rx="4"/><circle cx="20" cy="23" r="7"/><circle cx="20" cy="23" r="3"/><path d="M14 12l3-5h6l3 5"/><circle cx="31" cy="17" r="1"/></g><g transform="translate(681.1 449.2) rotate(19) scale(1.05) translate(-20 -20)" stroke-width="1.24"><path d="M14 30V8l16-4v22"/><ellipse cx="10" cy="30" rx="4.5" ry="3.5"/><ellipse cx="26" cy="26" rx="4.5" ry="3.5"/><path d="M14 14l16-4"/></g><g transform="translate(32.9 218.0) rotate(-1) scale(1.42) translate(-20 -20)" stroke-width="0.92"><circle cx="20" cy="22" r="13"/><path d="M20 14v8l6 4M6 10l5-5M34 10l-5-5M12 36l-3 3M28 36l3 3"/></g><g transform="translate(115.1 492.3) rotate(5) scale(1.49) translate(-20 -20)" stroke-width="0.87"><circle cx="20" cy="20" r="15"/><circle cx="20" cy="20" r="3"/><path d="M20 5v12M20 23v12M5 20h12M23 20h12M9 9l9 9M22 22l9 9M31 9l-9 9M18 22l-9 9"/></g><g transform="translate(391.9 217.0) rotate(-1) scale(1.07) translate(-20 -20)" stroke-width="1.21"><path d="M7 14l2-10 7 6h8l7-6 2 10c3 4 3 10 0 14-3 5-8 7-13 7s-10-2-13-7c-3-4-3-10 0-14z"/><circle cx="14" cy="19" r="2"/><circle cx="26" cy="19" r="2"/><path d="M18 25l2 2 2-2M4 24h8M4 28l8-2M36 24h-8M36 28l-8-2"/></g><g transform="translate(49.6 1.4) rotate(27) scale(1.71) translate(-20 -20)" stroke-width="0.76"><path d="M4 14h32v8H4zM16 2v36h8V2zM10 14v8M30 14v8M16 8h8M16 30h8"/></g><g transform="translate(722.9 358.9) rotate(8) scale(1.75) translate(-20 -20)" stroke-width="0.74"><path d="M4 8c10-5 22-5 32 0L20 38zM7 13c8-3 18-3 26 0"/><circle cx="18" cy="18" r="2"/><circle cx="24" cy="25" r="2"/></g><g transform="translate(45.8 260.2) rotate(-8) scale(1.05) translate(-20 -20)" stroke-width="1.24"><rect x="6" y="4" width="28" height="28" rx="5"/><path d="M6 18h28M10 10h20M12 32v4M28 32v4"/><circle cx="12" cy="25" r="2"/><circle cx="28" cy="25" r="2"/></g><g transform="translate(503.7 217.9) rotate(3) scale(1.00) translate(-20 -20)" stroke-width="1.30"><circle cx="20" cy="22" r="13"/><path d="M20 14v8l6 4M6 10l5-5M34 10l-5-5M12 36l-3 3M28 36l3 3"/></g><g transform="translate(591.3 202.1) rotate(-22) scale(1.20) translate(-20 -20)" stroke-width="1.08"><path d="M4 14h32v8H4zM16 2v36h8V2zM10 14v8M30 14v8M16 8h8M16 30h8"/></g><g transform="translate(607.9 568.2) rotate(6) scale(1.23) translate(-20 -20)" stroke-width="1.05"><circle cx="20" cy="20" r="15"/><circle cx="20" cy="20" r="3"/><path d="M20 5v12M20 23v12M5 20h12M23 20h12M9 9l9 9M22 22l9 9M31 9l-9 9M18 22l-9 9"/></g><g transform="translate(255.5 421.7) rotate(-7) scale(1.03) translate(-20 -20)" stroke-width="1.26"><path d="M5 19L20 6l15 13M9 16v18h22V16"/><rect x="16" y="23" width="8" height="11"/><rect x="11" y="19" width="4" height="4"/></g><g transform="translate(814.6 247.1) rotate(4) scale(1.23) translate(-20 -20)" stroke-width="1.06"><path d="M8 12h20v12a8 8 0 0 1-8 8h-4a8 8 0 0 1-8-8zM28 15h3a4 4 0 0 1 0 8h-3M12 4c-2 2 2 4 0 6M18 4c-2 2 2 4 0 6M24 4c-2 2 2 4 0 6M6 36h24"/></g><g transform="translate(303.9 64.4) rotate(34) scale(1.00) translate(-20 -20)" stroke-width="1.30"><circle cx="20" cy="20" r="15"/><circle cx="14" cy="17" r="2"/><circle cx="26" cy="17" r="2"/><path d="M12 24c4 5 12 5 16 0"/></g><g transform="translate(260.0 130.7) rotate(5) scale(1.15) translate(-20 -20)" stroke-width="1.13"><rect x="6" y="4" width="28" height="28" rx="5"/><path d="M6 18h28M10 10h20M12 32v4M28 32v4"/><circle cx="12" cy="25" r="2"/><circle cx="28" cy="25" r="2"/></g><g transform="translate(499.1 387.6) rotate(-10) scale(1.76) translate(-20 -20)" stroke-width="0.74"><path d="M20 4l4.5 10 10.5 1-8 7 2.5 11L20 27.5 10.5 33 13 22l-8-7 10.5-1z"/></g><g transform="translate(354.0 203.1) rotate(22) scale(1.18) translate(-20 -20)" stroke-width="1.10"><path d="M20 4l4.5 10 10.5 1-8 7 2.5 11L20 27.5 10.5 33 13 22l-8-7 10.5-1z"/></g><g transform="translate(620.8 233.3) rotate(0) scale(1.36) translate(-20 -20)" stroke-width="0.95"><path d="M20 3l-9 11h5l-8 10h6l-8 10h28l-8-10h6l-8-10h5zM20 34v5"/></g><g transform="translate(160.0 538.0) rotate(23) scale(1.09) translate(-20 -20)" stroke-width="1.19"><circle cx="20" cy="20" r="4"/><path d="M20 16c-3-6-3-10 0-12 3 2 3 6 0 12M24 20c6-3 10-3 12 0-2 3-6 3-12 0M20 24c3 6 3 10 0 12-3-2-3-6 0-12M16 20c-6 3-10 3-12 0 2-3 6-3 12 0M23 17c4-5 7-7 10-6 0 3-3 6-10 6M17 23c-4 5-7 7-10 6 0-3 3-6 10-6"/></g><g transform="translate(813.5 98.4) rotate(32) scale(1.43) translate(-20 -20)" stroke-width="0.91"><path d="M20 4l4.5 10 10.5 1-8 7 2.5 11L20 27.5 10.5 33 13 22l-8-7 10.5-1z"/></g><g transform="translate(65.0 372.0) rotate(26) scale(1.39) translate(-20 -20)" stroke-width="0.93"><path d="M4 14h32v8H4zM16 2v36h8V2zM10 14v8M30 14v8M16 8h8M16 30h8"/></g><g transform="translate(-5.2 185.1) rotate(24) scale(1.34) translate(-20 -20)" stroke-width="0.97"><path d="M4 14h32v8H4zM16 2v36h8V2zM10 14v8M30 14v8M16 8h8M16 30h8"/></g><g transform="translate(-12.3 21.7) rotate(17) scale(1.25) translate(-20 -20)" stroke-width="1.04"><path d="M11 18a9 9 0 0 1 18 0zM11 18l9 19 9-19M14 22l10 10M26 22l-8 14"/><circle cx="20" cy="6" r="2"/></g><g transform="translate(933.1 106.5) rotate(23) scale(1.17) translate(-20 -20)" stroke-width="1.11"><path d="M20 37c-7-9-11-15-11-21a11 11 0 0 1 22 0c0 6-4 12-11 21z"/><circle cx="20" cy="16" r="4"/></g><g transform="translate(902.9 400.3) rotate(11) scale(1.00) translate(-20 -20)" stroke-width="1.30"><path d="M4 14a18 18 0 0 0 32 0zM8 16a13 13 0 0 0 24 0"/><path d="M15 20l1 2M20 22l0 2M25 20l-1 2"/></g><g transform="translate(326.3 554.4) rotate(16) scale(1.03) translate(-20 -20)" stroke-width="1.27"><path d="M12 36c-4-3-6-8-6-13v-6a2 2 0 0 1 4 0v5V8a2 2 0 0 1 4 0v12V5a2 2 0 0 1 4 0v15V7a2 2 0 0 1 4 0v14v-8a2 2 0 0 1 4 0v11c0 6-3 10-6 12z"/></g><g transform="translate(221.1 -0.3) rotate(22) scale(1.18) translate(-20 -20)" stroke-width="1.10"><circle cx="20" cy="20" r="4"/><path d="M20 16c-3-6-3-10 0-12 3 2 3 6 0 12M24 20c6-3 10-3 12 0-2 3-6 3-12 0M20 24c3 6 3 10 0 12-3-2-3-6 0-12M16 20c-6 3-10 3-12 0 2-3 6-3 12 0M23 17c4-5 7-7 10-6 0 3-3 6-10 6M17 23c-4 5-7 7-10 6 0-3 3-6 10-6"/></g><g transform="translate(183.3 230.6) rotate(24) scale(1.74) translate(-20 -20)" stroke-width="0.75"><path d="M14 30V8l16-4v22"/><ellipse cx="10" cy="30" rx="4.5" ry="3.5"/><ellipse cx="26" cy="26" rx="4.5" ry="3.5"/><path d="M14 14l16-4"/></g><g transform="translate(694.9 80.6) rotate(-21) scale(1.08) translate(-20 -20)" stroke-width="1.20"><path d="M4 14h32v8H4zM16 2v36h8V2zM10 14v8M30 14v8M16 8h8M16 30h8"/></g><g transform="translate(796.1 1.2) rotate(5) scale(1.25) translate(-20 -20)" stroke-width="1.04"><rect x="6" y="4" width="28" height="32" rx="4"/><path d="M20 4v32M6 20h28M10 12h6M13 9v6M24 12h6M10 27l5 5M15 27l-5 5M24 27h6M24 31h6"/></g><g transform="translate(816.9 558.1) rotate(-6) scale(1.09) translate(-20 -20)" stroke-width="1.19"><circle cx="20" cy="20" r="15"/><ellipse cx="20" cy="20" rx="7" ry="15"/><path d="M5 20h30M8 12h24M8 28h24"/></g><g transform="translate(218.7 35.9) rotate(-4) scale(1.03) translate(-20 -20)" stroke-width="1.27"><circle cx="20" cy="22" r="13"/><path d="M20 14v8l6 4M6 10l5-5M34 10l-5-5M12 36l-3 3M28 36l3 3"/></g><g transform="translate(208.5 403.8) rotate(27) scale(1.03) translate(-20 -20)" stroke-width="1.26"><circle cx="20" cy="22" r="13"/><path d="M20 14v8l6 4M6 10l5-5M34 10l-5-5M12 36l-3 3M28 36l3 3"/></g><g transform="translate(3.5 440.7) rotate(3) scale(1.78) translate(-20 -20)" stroke-width="0.73"><path d="M11 30V13a9 9 0 0 1 18 0v17zM18 30v8h4v-8M15 14l2 2M23 14l2 2M17 22c2 2 4 2 6 0"/></g><g transform="translate(287.7 366.1) rotate(10) scale(1.05) translate(-20 -20)" stroke-width="1.24"><path d="M7 14l2-10 7 6h8l7-6 2 10c3 4 3 10 0 14-3 5-8 7-13 7s-10-2-13-7c-3-4-3-10 0-14z"/><circle cx="14" cy="19" r="2"/><circle cx="26" cy="19" r="2"/><path d="M18 25l2 2 2-2M4 24h8M4 28l8-2M36 24h-8M36 28l-8-2"/></g><g transform="translate(215.1 535.4) rotate(32) scale(1.24) translate(-20 -20)" stroke-width="1.05"><circle cx="20" cy="20" r="15"/><ellipse cx="20" cy="20" rx="7" ry="15"/><path d="M5 20h30M8 12h24M8 28h24"/></g><g transform="translate(257.4 215.5) rotate(-22) scale(1.21) translate(-20 -20)" stroke-width="1.08"><path d="M4 14a18 18 0 0 0 32 0zM8 16a13 13 0 0 0 24 0"/><path d="M15 20l1 2M20 22l0 2M25 20l-1 2"/></g><g transform="translate(320.3 -6.2) rotate(-0) scale(1.31) translate(-20 -20)" stroke-width="0.99"><rect x="4" y="12" width="32" height="22" rx="4"/><circle cx="20" cy="23" r="7"/><circle cx="20" cy="23" r="3"/><path d="M14 12l3-5h6l3 5"/><circle cx="31" cy="17" r="1"/></g><g transform="translate(919.8 554.9) rotate(32) scale(1.05) translate(-20 -20)" stroke-width="1.24"><circle cx="20" cy="20" r="15"/><circle cx="14" cy="17" r="2"/><circle cx="26" cy="17" r="2"/><path d="M12 24c4 5 12 5 16 0"/></g><g transform="translate(400.7 253.6) rotate(-20) scale(1.29) translate(-20 -20)" stroke-width="1.01"><path d="M4 14h32v8H4zM16 2v36h8V2zM10 14v8M30 14v8M16 8h8M16 30h8"/></g><g transform="translate(708.9 187.3) rotate(-12) scale(1.02) translate(-20 -20)" stroke-width="1.28"><path d="M12 36c-4-3-6-8-6-13v-6a2 2 0 0 1 4 0v5V8a2 2 0 0 1 4 0v12V5a2 2 0 0 1 4 0v15V7a2 2 0 0 1 4 0v14v-8a2 2 0 0 1 4 0v11c0 6-3 10-6 12z"/></g><g transform="translate(164.2 -7.4) rotate(14) scale(1.02) translate(-20 -20)" stroke-width="1.27"><path d="M7 14l2-10 7 6h8l7-6 2 10c3 4 3 10 0 14-3 5-8 7-13 7s-10-2-13-7c-3-4-3-10 0-14z"/><circle cx="14" cy="19" r="2"/><circle cx="26" cy="19" r="2"/><path d="M18 25l2 2 2-2M4 24h8M4 28l8-2M36 24h-8M36 28l-8-2"/></g><g transform="translate(830.0 506.9) rotate(-1) scale(1.17) translate(-20 -20)" stroke-width="1.11"><path d="M3 19L37 5 29 35 19 25zM19 25l-3 9 6-6M19 25L37 5"/></g><g transform="translate(-16.6 538.0) rotate(-17) scale(1.20) translate(-20 -20)" stroke-width="1.08"><path d="M20 4c7 0 11 5 11 11 0 8-6 13-11 14-5-1-11-6-11-14 0-6 4-11 11-11zM20 29l-2 3h4zM20 32c-3 3 3 5 0 8"/><path d="M14 12c1-3 3-4 5-4"/></g><g transform="translate(472.8 168.4) rotate(13) scale(1.38) translate(-20 -20)" stroke-width="0.95"><rect x="6" y="4" width="28" height="28" rx="5"/><path d="M6 18h28M10 10h20M12 32v4M28 32v4"/><circle cx="12" cy="25" r="2"/><circle cx="28" cy="25" r="2"/></g><g transform="translate(-7.1 69.6) rotate(15) scale(1.79) translate(-20 -20)" stroke-width="0.72"><path d="M20 3l-9 11h5l-8 10h6l-8 10h28l-8-10h6l-8-10h5zM20 34v5"/></g><g transform="translate(847.9 428.1) rotate(9) scale(1.64) translate(-20 -20)" stroke-width="0.79"><path d="M4 14h32v8H4zM16 2v36h8V2zM10 14v8M30 14v8M16 8h8M16 30h8"/></g><g transform="translate(348.7 477.5) rotate(-8) scale(1.45) translate(-20 -20)" stroke-width="0.90"><path d="M4 14a18 18 0 0 0 32 0zM8 16a13 13 0 0 0 24 0"/><path d="M15 20l1 2M20 22l0 2M25 20l-1 2"/></g><g transform="translate(666.9 63.8) rotate(7) scale(1.12) translate(-20 -20)" stroke-width="1.16"><path d="M6 6h28a3 3 0 0 1 3 3v17a3 3 0 0 1-3 3H16l-8 7v-7H6a3 3 0 0 1-3-3V9a3 3 0 0 1 3-3zM10 13h20M10 19h14"/></g><g transform="translate(436.7 4.0) rotate(-21) scale(1.31) translate(-20 -20)" stroke-width="0.99"><circle cx="20" cy="20" r="15"/><ellipse cx="20" cy="20" rx="7" ry="15"/><path d="M5 20h30M8 12h24M8 28h24"/></g><g transform="translate(942.0 486.9) rotate(32) scale(1.71) translate(-20 -20)" stroke-width="0.76"><path d="M20 4l4.5 10 10.5 1-8 7 2.5 11L20 27.5 10.5 33 13 22l-8-7 10.5-1z"/></g><g transform="translate(-18.9 -19.4) rotate(9) scale(1.27) translate(-20 -20)" stroke-width="1.02"><path d="M4 28a16 16 0 0 1 32 0M9 28a11 11 0 0 1 22 0M14 28a6 6 0 0 1 12 0"/><path d="M2 28h8M30 28h8"/></g><g transform="translate(556.8 393.9) rotate(-6) scale(1.10) translate(-20 -20)" stroke-width="1.18"><path d="M4 8c10-5 22-5 32 0L20 38zM7 13c8-3 18-3 26 0"/><circle cx="18" cy="18" r="2"/><circle cx="24" cy="25" r="2"/></g><g transform="translate(135.6 18.6) rotate(-26) scale(1.02) translate(-20 -20)" stroke-width="1.27"><rect x="6" y="4" width="28" height="32" rx="4"/><path d="M20 4v32M6 20h28M10 12h6M13 9v6M24 12h6M10 27l5 5M15 27l-5 5M24 27h6M24 31h6"/></g><g transform="translate(559.3 287.7) rotate(-31) scale(1.21) translate(-20 -20)" stroke-width="1.07"><path d="M20 4l4.5 10 10.5 1-8 7 2.5 11L20 27.5 10.5 33 13 22l-8-7 10.5-1z"/></g><g transform="translate(598.9 131.7) rotate(5) scale(1.31) translate(-20 -20)" stroke-width="0.99"><path d="M4 14h32v8H4zM16 2v36h8V2zM10 14v8M30 14v8M16 8h8M16 30h8"/></g><g transform="translate(454.2 208.4) rotate(-30) scale(1.34) translate(-20 -20)" stroke-width="0.97"><path d="M11 18a9 9 0 0 1 18 0zM11 18l9 19 9-19M14 22l10 10M26 22l-8 14"/><circle cx="20" cy="6" r="2"/></g><g transform="translate(425.3 135.4) rotate(-28) scale(1.16) translate(-20 -20)" stroke-width="1.12"><circle cx="26" cy="14" r="7"/><path d="M8 34a7 7 0 0 1 1-14 9 9 0 0 1 17 2 6 6 0 0 1 2 12z"/></g><g transform="translate(788.0 210.5) rotate(-22) scale(1.47) translate(-20 -20)" stroke-width="0.88"><path d="M6 34C6 18 16 6 34 6c0 18-12 28-28 28zM6 34L26 14M14 26h8M18 22v-8"/></g><g transform="translate(835.5 342.0) rotate(-9) scale(1.45) translate(-20 -20)" stroke-width="0.90"><path d="M14 30V8l16-4v22"/><ellipse cx="10" cy="30" rx="4.5" ry="3.5"/><ellipse cx="26" cy="26" rx="4.5" ry="3.5"/><path d="M14 14l16-4"/></g><g transform="translate(435.2 431.1) rotate(32) scale(1.57) translate(-20 -20)" stroke-width="0.83"><path d="M20 4l4.5 10 10.5 1-8 7 2.5 11L20 27.5 10.5 33 13 22l-8-7 10.5-1z"/></g><g transform="translate(655.4 227.6) rotate(5) scale(1.03) translate(-20 -20)" stroke-width="1.26"><path d="M6 6h28a3 3 0 0 1 3 3v17a3 3 0 0 1-3 3H16l-8 7v-7H6a3 3 0 0 1-3-3V9a3 3 0 0 1 3-3zM10 13h20M10 19h14"/></g><g transform="translate(449.9 519.8) rotate(25) scale(1.58) translate(-20 -20)" stroke-width="0.82"><rect x="6" y="4" width="28" height="28" rx="5"/><path d="M6 18h28M10 10h20M12 32v4M28 32v4"/><circle cx="12" cy="25" r="2"/><circle cx="28" cy="25" r="2"/></g><g transform="translate(848.7 196.0) rotate(-1) scale(1.57) translate(-20 -20)" stroke-width="0.83"><path d="M16 36V8a4 4 0 0 1 8 0v28M16 22h-5a3 3 0 0 1-3-3v-5a2 2 0 0 1 4 0v4h4M24 18h4v-4a2 2 0 0 1 4 0v5a3 3 0 0 1-3 3h-5M10 36h20"/></g><g transform="translate(67.8 579.3) rotate(-31) scale(1.08) translate(-20 -20)" stroke-width="1.20"><path d="M12 36c-4-3-6-8-6-13v-6a2 2 0 0 1 4 0v5V8a2 2 0 0 1 4 0v12V5a2 2 0 0 1 4 0v15V7a2 2 0 0 1 4 0v14v-8a2 2 0 0 1 4 0v11c0 6-3 10-6 12z"/></g><g transform="translate(232.8 476.8) rotate(5) scale(1.65) translate(-20 -20)" stroke-width="0.79"><circle cx="20" cy="22" r="13"/><path d="M20 14v8l6 4M6 10l5-5M34 10l-5-5M12 36l-3 3M28 36l3 3"/></g><g transform="translate(520.5 581.3) rotate(-26) scale(1.36) translate(-20 -20)" stroke-width="0.96"><circle cx="20" cy="22" r="13"/><path d="M20 14v8l6 4M6 10l5-5M34 10l-5-5M12 36l-3 3M28 36l3 3"/></g><g transform="translate(389.2 62.9) rotate(8) scale(1.06) translate(-20 -20)" stroke-width="1.22"><path d="M16 36V8a4 4 0 0 1 8 0v28M16 22h-5a3 3 0 0 1-3-3v-5a2 2 0 0 1 4 0v4h4M24 18h4v-4a2 2 0 0 1 4 0v5a3 3 0 0 1-3 3h-5M10 36h20"/></g><g transform="translate(31.5 170.3) rotate(22) scale(1.01) translate(-20 -20)" stroke-width="1.29"><path d="M12 36c-4-3-6-8-6-13v-6a2 2 0 0 1 4 0v5V8a2 2 0 0 1 4 0v12V5a2 2 0 0 1 4 0v15V7a2 2 0 0 1 4 0v14v-8a2 2 0 0 1 4 0v11c0 6-3 10-6 12z"/></g><g transform="translate(194.6 357.0) rotate(-15) scale(1.07) translate(-20 -20)" stroke-width="1.22"><path d="M4 14a18 18 0 0 0 32 0zM8 16a13 13 0 0 0 24 0"/><path d="M15 20l1 2M20 22l0 2M25 20l-1 2"/></g><g transform="translate(485.1 437.8) rotate(12) scale(1.02) translate(-20 -20)" stroke-width="1.27"><rect x="4" y="12" width="32" height="22" rx="4"/><circle cx="20" cy="23" r="7"/><circle cx="20" cy="23" r="3"/><path d="M14 12l3-5h6l3 5"/><circle cx="31" cy="17" r="1"/></g><g transform="translate(110.1 141.5) rotate(-2) scale(1.35) translate(-20 -20)" stroke-width="0.96"><circle cx="20" cy="20" r="4"/><path d="M20 16c-3-6-3-10 0-12 3 2 3 6 0 12M24 20c6-3 10-3 12 0-2 3-6 3-12 0M20 24c3 6 3 10 0 12-3-2-3-6 0-12M16 20c-6 3-10 3-12 0 2-3 6-3 12 0M23 17c4-5 7-7 10-6 0 3-3 6-10 6M17 23c-4 5-7 7-10 6 0-3 3-6 10-6"/></g><g transform="translate(561.8 124.6) rotate(3) scale(1.18) translate(-20 -20)" stroke-width="1.11"><circle cx="20" cy="20" r="15"/><ellipse cx="20" cy="20" rx="7" ry="15"/><path d="M5 20h30M8 12h24M8 28h24"/></g><g transform="translate(64.5 431.8) rotate(-25) scale(1.53) translate(-20 -20)" stroke-width="0.85"><path d="M6 6h28a3 3 0 0 1 3 3v17a3 3 0 0 1-3 3H16l-8 7v-7H6a3 3 0 0 1-3-3V9a3 3 0 0 1 3-3zM10 13h20M10 19h14"/></g><g transform="translate(534.3 49.3) rotate(1) scale(1.34) translate(-20 -20)" stroke-width="0.97"><path d="M3 19L37 5 29 35 19 25zM19 25l-3 9 6-6M19 25L37 5"/></g><g transform="translate(297.2 119.4) rotate(9) scale(1.07) translate(-20 -20)" stroke-width="1.21"><path d="M20 37c-7-9-11-15-11-21a11 11 0 0 1 22 0c0 6-4 12-11 21z"/><circle cx="20" cy="16" r="4"/></g><g transform="translate(894.8 574.9) rotate(4) scale(1.10) translate(-20 -20)" stroke-width="1.18"><path d="M14 30V8l16-4v22"/><ellipse cx="10" cy="30" rx="4.5" ry="3.5"/><ellipse cx="26" cy="26" rx="4.5" ry="3.5"/><path d="M14 14l16-4"/></g><g transform="translate(705.8 574.2) rotate(5) scale(1.03) translate(-20 -20)" stroke-width="1.26"><rect x="6" y="4" width="28" height="28" rx="5"/><path d="M6 18h28M10 10h20M12 32v4M28 32v4"/><circle cx="12" cy="25" r="2"/><circle cx="28" cy="25" r="2"/></g><g transform="translate(635.0 447.7) rotate(20) scale(1.34) translate(-20 -20)" stroke-width="0.97"><path d="M11 18a9 9 0 0 1 18 0zM11 18l9 19 9-19M14 22l10 10M26 22l-8 14"/><circle cx="20" cy="6" r="2"/></g><g transform="translate(515.6 10.2) rotate(-1) scale(1.27) translate(-20 -20)" stroke-width="1.02"><path d="M20 37c-7-9-11-15-11-21a11 11 0 0 1 22 0c0 6-4 12-11 21z"/><circle cx="20" cy="16" r="4"/></g><g transform="translate(331.9 432.0) rotate(26) scale(1.12) translate(-20 -20)" stroke-width="1.16"><path d="M14 30V8l16-4v22"/><ellipse cx="10" cy="30" rx="4.5" ry="3.5"/><ellipse cx="26" cy="26" rx="4.5" ry="3.5"/><path d="M14 14l16-4"/></g><g transform="translate(562.7 571.2) rotate(17) scale(1.31) translate(-20 -20)" stroke-width="0.99"><circle cx="20" cy="20" r="4"/><path d="M20 16c-3-6-3-10 0-12 3 2 3 6 0 12M24 20c6-3 10-3 12 0-2 3-6 3-12 0M20 24c3 6 3 10 0 12-3-2-3-6 0-12M16 20c-6 3-10 3-12 0 2-3 6-3 12 0M23 17c4-5 7-7 10-6 0 3-3 6-10 6M17 23c-4 5-7 7-10 6 0-3 3-6 10-6"/></g><g transform="translate(599.8 -10.1) rotate(22) scale(1.35) translate(-20 -20)" stroke-width="0.96"><path d="M5 19L20 6l15 13M9 16v18h22V16"/><rect x="16" y="23" width="8" height="11"/><rect x="11" y="19" width="4" height="4"/></g><g transform="translate(640.3 371.9) rotate(-12) scale(1.53) translate(-20 -20)" stroke-width="0.85"><circle cx="20" cy="20" r="4"/><path d="M20 16c-3-6-3-10 0-12 3 2 3 6 0 12M24 20c6-3 10-3 12 0-2 3-6 3-12 0M20 24c3 6 3 10 0 12-3-2-3-6 0-12M16 20c-6 3-10 3-12 0 2-3 6-3 12 0M23 17c4-5 7-7 10-6 0 3-3 6-10 6M17 23c-4 5-7 7-10 6 0-3 3-6 10-6"/></g><g transform="translate(759.0 99.8) rotate(-0) scale(1.14) translate(-20 -20)" stroke-width="1.14"><path d="M8 12h20v12a8 8 0 0 1-8 8h-4a8 8 0 0 1-8-8zM28 15h3a4 4 0 0 1 0 8h-3M12 4c-2 2 2 4 0 6M18 4c-2 2 2 4 0 6M24 4c-2 2 2 4 0 6M6 36h24"/></g><g transform="translate(106.7 -13.6) rotate(2) scale(1.20) translate(-20 -20)" stroke-width="1.09"><path d="M20 4c7 0 11 5 11 11 0 8-6 13-11 14-5-1-11-6-11-14 0-6 4-11 11-11zM20 29l-2 3h4zM20 32c-3 3 3 5 0 8"/><path d="M14 12c1-3 3-4 5-4"/></g><g transform="translate(335.7 47.7) rotate(-14) scale(1.09) translate(-20 -20)" stroke-width="1.19"><rect x="6" y="4" width="28" height="28" rx="5"/><path d="M6 18h28M10 10h20M12 32v4M28 32v4"/><circle cx="12" cy="25" r="2"/><circle cx="28" cy="25" r="2"/></g><g transform="translate(502.0 486.8) rotate(-21) scale(1.08) translate(-20 -20)" stroke-width="1.21"><path d="M4 14h32v8H4zM16 2v36h8V2zM10 14v8M30 14v8M16 8h8M16 30h8"/></g><g transform="translate(620.4 515.4) rotate(3) scale(1.00) translate(-20 -20)" stroke-width="1.30"><path d="M11 30V13a9 9 0 0 1 18 0v17zM18 30v8h4v-8M15 14l2 2M23 14l2 2M17 22c2 2 4 2 6 0"/></g><g transform="translate(265.3 504.7) rotate(-30) scale(1.15) translate(-20 -20)" stroke-width="1.13"><path d="M7 14l2-10 7 6h8l7-6 2 10c3 4 3 10 0 14-3 5-8 7-13 7s-10-2-13-7c-3-4-3-10 0-14z"/><circle cx="14" cy="19" r="2"/><circle cx="26" cy="19" r="2"/><path d="M18 25l2 2 2-2M4 24h8M4 28l8-2M36 24h-8M36 28l-8-2"/></g><g transform="translate(205.1 271.3) rotate(27) scale(1.13) translate(-20 -20)" stroke-width="1.15"><circle cx="20" cy="20" r="4"/><path d="M20 16c-3-6-3-10 0-12 3 2 3 6 0 12M24 20c6-3 10-3 12 0-2 3-6 3-12 0M20 24c3 6 3 10 0 12-3-2-3-6 0-12M16 20c-6 3-10 3-12 0 2-3 6-3 12 0M23 17c4-5 7-7 10-6 0 3-3 6-10 6M17 23c-4 5-7 7-10 6 0-3 3-6 10-6"/></g><g transform="translate(333.2 86.6) rotate(16) scale(1.37) translate(-20 -20)" stroke-width="0.95"><rect x="4" y="12" width="32" height="22" rx="4"/><circle cx="20" cy="23" r="7"/><circle cx="20" cy="23" r="3"/><path d="M14 12l3-5h6l3 5"/><circle cx="31" cy="17" r="1"/></g><g transform="translate(40.4 531.0) rotate(10) scale(1.10) translate(-20 -20)" stroke-width="1.18"><path d="M8 12h20v12a8 8 0 0 1-8 8h-4a8 8 0 0 1-8-8zM28 15h3a4 4 0 0 1 0 8h-3M12 4c-2 2 2 4 0 6M18 4c-2 2 2 4 0 6M24 4c-2 2 2 4 0 6M6 36h24"/></g><g transform="translate(249.1 52.6) rotate(-17) scale(1.02) translate(-20 -20)" stroke-width="1.27"><path d="M16 36V8a4 4 0 0 1 8 0v28M16 22h-5a3 3 0 0 1-3-3v-5a2 2 0 0 1 4 0v4h4M24 18h4v-4a2 2 0 0 1 4 0v5a3 3 0 0 1-3 3h-5M10 36h20"/></g><g transform="translate(937.1 252.6) rotate(-12) scale(1.54) translate(-20 -20)" stroke-width="0.84"><path d="M12 36c-4-3-6-8-6-13v-6a2 2 0 0 1 4 0v5V8a2 2 0 0 1 4 0v12V5a2 2 0 0 1 4 0v15V7a2 2 0 0 1 4 0v14v-8a2 2 0 0 1 4 0v11c0 6-3 10-6 12z"/></g><g transform="translate(818.3 47.8) rotate(10) scale(1.06) translate(-20 -20)" stroke-width="1.23"><circle cx="20" cy="22" r="13"/><path d="M20 14v8l6 4M6 10l5-5M34 10l-5-5M12 36l-3 3M28 36l3 3"/></g><g transform="translate(339.5 376.9) rotate(7) scale(1.19) translate(-20 -20)" stroke-width="1.09"><path d="M20 4c7 0 11 5 11 11 0 8-6 13-11 14-5-1-11-6-11-14 0-6 4-11 11-11zM20 29l-2 3h4zM20 32c-3 3 3 5 0 8"/><path d="M14 12c1-3 3-4 5-4"/></g><g transform="translate(552.7 204.5) rotate(-4) scale(1.03) translate(-20 -20)" stroke-width="1.26"><path d="M6 6h28a3 3 0 0 1 3 3v17a3 3 0 0 1-3 3H16l-8 7v-7H6a3 3 0 0 1-3-3V9a3 3 0 0 1 3-3zM10 13h20M10 19h14"/></g><g transform="translate(34.5 136.2) rotate(-26) scale(1.03) translate(-20 -20)" stroke-width="1.26"><path d="M4 8c10-5 22-5 32 0L20 38zM7 13c8-3 18-3 26 0"/><circle cx="18" cy="18" r="2"/><circle cx="24" cy="25" r="2"/></g><g transform="translate(114.6 374.3) rotate(-29) scale(1.47) translate(-20 -20)" stroke-width="0.89"><path d="M5 19L20 6l15 13M9 16v18h22V16"/><rect x="16" y="23" width="8" height="11"/><rect x="11" y="19" width="4" height="4"/></g><g transform="translate(879.0 -15.8) rotate(11) scale(1.24) translate(-20 -20)" stroke-width="1.05"><path d="M4 8c10-5 22-5 32 0L20 38zM7 13c8-3 18-3 26 0"/><circle cx="18" cy="18" r="2"/><circle cx="24" cy="25" r="2"/></g><g transform="translate(717.8 403.3) rotate(16) scale(1.22) translate(-20 -20)" stroke-width="1.07"><rect x="6" y="4" width="28" height="32" rx="4"/><path d="M20 4v32M6 20h28M10 12h6M13 9v6M24 12h6M10 27l5 5M15 27l-5 5M24 27h6M24 31h6"/></g><g transform="translate(941.2 177.6) rotate(-2) scale(1.10) translate(-20 -20)" stroke-width="1.18"><path d="M20 3c7 6 8 16 4 25h-8c-4-9-3-19 4-25z"/><circle cx="20" cy="14" r="3"/><path d="M16 24l-6 6v4l6-4M24 24l6 6v4l-6-4M17 31l3 6 3-6"/></g><g transform="translate(298.8 498.2) rotate(-8) scale(1.04) translate(-20 -20)" stroke-width="1.24"><circle cx="20" cy="20" r="15"/><circle cx="20" cy="20" r="3"/><path d="M20 5v12M20 23v12M5 20h12M23 20h12M9 9l9 9M22 22l9 9M31 9l-9 9M18 22l-9 9"/></g><g transform="translate(153.7 298.4) rotate(33) scale(1.20) translate(-20 -20)" stroke-width="1.08"><path d="M6 6h28a3 3 0 0 1 3 3v17a3 3 0 0 1-3 3H16l-8 7v-7H6a3 3 0 0 1-3-3V9a3 3 0 0 1 3-3zM10 13h20M10 19h14"/></g><g transform="translate(313.3 193.9) rotate(18) scale(1.30) translate(-20 -20)" stroke-width="1.00"><rect x="2" y="8" width="14" height="6" rx="3"/><rect x="20" y="8" width="14" height="6" rx="3"/><rect x="8" y="24" width="14" height="6" rx="3"/><circle cx="30" cy="27" r="3"/></g><g transform="translate(-14.0 489.6) rotate(-19) scale(1.34) translate(-20 -20)" stroke-width="0.97"><circle cx="20" cy="20" r="4"/><path d="M20 16c-3-6-3-10 0-12 3 2 3 6 0 12M24 20c6-3 10-3 12 0-2 3-6 3-12 0M20 24c3 6 3 10 0 12-3-2-3-6 0-12M16 20c-6 3-10 3-12 0 2-3 6-3 12 0M23 17c4-5 7-7 10-6 0 3-3 6-10 6M17 23c-4 5-7 7-10 6 0-3 3-6 10-6"/></g><g transform="translate(203.0 444.7) rotate(-25) scale(1.06) translate(-20 -20)" stroke-width="1.23"><path d="M7 14l2-10 7 6h8l7-6 2 10c3 4 3 10 0 14-3 5-8 7-13 7s-10-2-13-7c-3-4-3-10 0-14z"/><circle cx="14" cy="19" r="2"/><circle cx="26" cy="19" r="2"/><path d="M18 25l2 2 2-2M4 24h8M4 28l8-2M36 24h-8M36 28l-8-2"/></g><g transform="translate(420.2 345.5) rotate(-0) scale(1.01) translate(-20 -20)" stroke-width="1.28"><path d="M8 12h20v12a8 8 0 0 1-8 8h-4a8 8 0 0 1-8-8zM28 15h3a4 4 0 0 1 0 8h-3M12 4c-2 2 2 4 0 6M18 4c-2 2 2 4 0 6M24 4c-2 2 2 4 0 6M6 36h24"/></g><g transform="translate(737.4 73.0) rotate(-1) scale(1.09) translate(-20 -20)" stroke-width="1.20"><path d="M4 8c10-5 22-5 32 0L20 38zM7 13c8-3 18-3 26 0"/><circle cx="18" cy="18" r="2"/><circle cx="24" cy="25" r="2"/></g><g transform="translate(738.1 218.8) rotate(30) scale(1.52) translate(-20 -20)" stroke-width="0.86"><circle cx="20" cy="20" r="15"/><ellipse cx="20" cy="20" rx="7" ry="15"/><path d="M5 20h30M8 12h24M8 28h24"/></g><g transform="translate(932.7 329.8) rotate(33) scale(1.41) translate(-20 -20)" stroke-width="0.92"><path d="M4 28a16 16 0 0 1 32 0M9 28a11 11 0 0 1 22 0M14 28a6 6 0 0 1 12 0"/><path d="M2 28h8M30 28h8"/></g><g transform="translate(227.9 574.9) rotate(29) scale(1.12) translate(-20 -20)" stroke-width="1.16"><path d="M3 19L37 5 29 35 19 25zM19 25l-3 9 6-6M19 25L37 5"/></g><g transform="translate(481.2 -16.4) rotate(25) scale(1.17) translate(-20 -20)" stroke-width="1.11"><rect x="2" y="8" width="14" height="6" rx="3"/><rect x="20" y="8" width="14" height="6" rx="3"/><rect x="8" y="24" width="14" height="6" rx="3"/><circle cx="30" cy="27" r="3"/></g><g transform="translate(247.3 260.1) rotate(24) scale(1.13) translate(-20 -20)" stroke-width="1.15"><rect x="2" y="8" width="14" height="6" rx="3"/><rect x="20" y="8" width="14" height="6" rx="3"/><rect x="8" y="24" width="14" height="6" rx="3"/><circle cx="30" cy="27" r="3"/></g><g transform="translate(673.5 351.3) rotate(-6) scale(1.05) translate(-20 -20)" stroke-width="1.24"><circle cx="20" cy="20" r="15"/><ellipse cx="20" cy="20" rx="7" ry="15"/><path d="M5 20h30M8 12h24M8 28h24"/></g><g transform="translate(366.0 309.0) rotate(33) scale(1.03) translate(-20 -20)" stroke-width="1.27"><circle cx="26" cy="14" r="7"/><path d="M8 34a7 7 0 0 1 1-14 9 9 0 0 1 17 2 6 6 0 0 1 2 12z"/></g><g transform="translate(480.4 581.9) rotate(32) scale(1.23) translate(-20 -20)" stroke-width="1.06"><circle cx="20" cy="20" r="15"/><circle cx="20" cy="20" r="3"/><path d="M20 5v12M20 23v12M5 20h12M23 20h12M9 9l9 9M22 22l9 9M31 9l-9 9M18 22l-9 9"/></g><g transform="translate(274.5 73.9) rotate(-19) scale(1.01) translate(-20 -20)" stroke-width="1.29"><path d="M6 34C6 18 16 6 34 6c0 18-12 28-28 28zM6 34L26 14M14 26h8M18 22v-8"/></g><g transform="translate(130.6 530.7) rotate(7) scale(1.01) translate(-20 -20)" stroke-width="1.29"><rect x="2" y="8" width="14" height="6" rx="3"/><rect x="20" y="8" width="14" height="6" rx="3"/><rect x="8" y="24" width="14" height="6" rx="3"/><circle cx="30" cy="27" r="3"/></g><g transform="translate(-18.4 575.5) rotate(-21) scale(1.08) translate(-20 -20)" stroke-width="1.20"><path d="M4 14h32v8H4zM16 2v36h8V2zM10 14v8M30 14v8M16 8h8M16 30h8"/></g><g transform="translate(348.0 527.7) rotate(-24) scale(1.14) translate(-20 -20)" stroke-width="1.14"><path d="M4 8c10-5 22-5 32 0L20 38zM7 13c8-3 18-3 26 0"/><circle cx="18" cy="18" r="2"/><circle cx="24" cy="25" r="2"/></g><g transform="translate(183.9 500.9) rotate(-10) scale(1.07) translate(-20 -20)" stroke-width="1.22"><path d="M20 4l4.5 10 10.5 1-8 7 2.5 11L20 27.5 10.5 33 13 22l-8-7 10.5-1z"/></g><g transform="translate(717.9 546.0) rotate(-23) scale(1.03) translate(-20 -20)" stroke-width="1.26"><path d="M4 28a16 16 0 0 1 32 0M9 28a11 11 0 0 1 22 0M14 28a6 6 0 0 1 12 0"/><path d="M2 28h8M30 28h8"/></g><g transform="translate(678.7 176.8) rotate(13) scale(1.01) translate(-20 -20)" stroke-width="1.29"><rect x="6" y="4" width="28" height="28" rx="5"/><path d="M6 18h28M10 10h20M12 32v4M28 32v4"/><circle cx="12" cy="25" r="2"/><circle cx="28" cy="25" r="2"/></g><g transform="translate(167.8 25.1) rotate(20) scale(1.13) translate(-20 -20)" stroke-width="1.15"><path d="M5 19L20 6l15 13M9 16v18h22V16"/><rect x="16" y="23" width="8" height="11"/><rect x="11" y="19" width="4" height="4"/></g><g transform="translate(885.3 262.6) rotate(20) scale(1.07) translate(-20 -20)" stroke-width="1.22"><rect x="2" y="8" width="14" height="6" rx="3"/><rect x="20" y="8" width="14" height="6" rx="3"/><rect x="8" y="24" width="14" height="6" rx="3"/><circle cx="30" cy="27" r="3"/></g><g transform="translate(794.8 580.7) rotate(10) scale(1.03) translate(-20 -20)" stroke-width="1.26"><circle cx="20" cy="20" r="4"/><path d="M20 16c-3-6-3-10 0-12 3 2 3 6 0 12M24 20c6-3 10-3 12 0-2 3-6 3-12 0M20 24c3 6 3 10 0 12-3-2-3-6 0-12M16 20c-6 3-10 3-12 0 2-3 6-3 12 0M23 17c4-5 7-7 10-6 0 3-3 6-10 6M17 23c-4 5-7 7-10 6 0-3 3-6 10-6"/></g><g transform="translate(695.9 -18.6) rotate(-3) scale(1.07) translate(-20 -20)" stroke-width="1.21"><path d="M4 8c10-5 22-5 32 0L20 38zM7 13c8-3 18-3 26 0"/><circle cx="18" cy="18" r="2"/><circle cx="24" cy="25" r="2"/></g><g transform="translate(752.1 401.5) rotate(-7) scale(1.11) translate(-20 -20)" stroke-width="1.17"><circle cx="20" cy="20" r="4"/><path d="M20 16c-3-6-3-10 0-12 3 2 3 6 0 12M24 20c6-3 10-3 12 0-2 3-6 3-12 0M20 24c3 6 3 10 0 12-3-2-3-6 0-12M16 20c-6 3-10 3-12 0 2-3 6-3 12 0M23 17c4-5 7-7 10-6 0 3-3 6-10 6M17 23c-4 5-7 7-10 6 0-3 3-6 10-6"/></g><g transform="translate(399.0 24.9) rotate(-28) scale(1.10) translate(-20 -20)" stroke-width="1.18"><path d="M7 14l2-10 7 6h8l7-6 2 10c3 4 3 10 0 14-3 5-8 7-13 7s-10-2-13-7c-3-4-3-10 0-14z"/><circle cx="14" cy="19" r="2"/><circle cx="26" cy="19" r="2"/><path d="M18 25l2 2 2-2M4 24h8M4 28l8-2M36 24h-8M36 28l-8-2"/></g><circle cx="833.7" cy="124.4" r="3.3"/><circle cx="900.8" cy="351.0" r="3.3"/><rect x="79.6" y="457.0" width="8.0" height="2.7" rx="1.3" transform="rotate(90 83.6 458.3)"/><circle cx="901.2" cy="97.1" r="1.8"/><rect x="371.1" y="370.8" width="13.9" height="4.6" rx="2.3" transform="rotate(0 378.0 373.1)"/><circle cx="244.4" cy="444.9" r="2.7"/><path d="M533.7 424.1q0 3.8 3.8 3.8q-3.8 0 -3.8 3.8q0 -3.8 -3.8 -3.8q3.8 0 3.8 -3.8z"/><circle cx="761.4" cy="375.4" r="2.8"/><rect x="881.5" y="412.9" width="9.3" height="3.1" rx="1.6" transform="rotate(-20 886.2 414.5)"/><circle cx="48.2" cy="462.1" r="2.0"/><rect x="519.5" y="111.5" width="13.0" height="4.3" rx="2.2" transform="rotate(0 525.9 113.7)"/><circle cx="465.0" cy="274.5" r="2.5"/><path d="M603.0 163.4q0 2.4 2.4 2.4q-2.4 0 -2.4 2.4q0 -2.4 -2.4 -2.4q2.4 0 2.4 -2.4z"/><circle cx="196.1" cy="110.8" r="3.3"/><circle cx="640.0" cy="530.2" r="2.4"/><rect x="205.2" y="327.7" width="14.3" height="4.8" rx="2.4" transform="rotate(-20 212.3 330.1)"/><circle cx="838.3" cy="147.9" r="3.2"/><rect x="457.2" y="131.8" width="11.3" height="3.8" rx="1.9" transform="rotate(20 462.8 133.7)"/><circle cx="255.7" cy="559.3" r="2.4"/><path d="M537.8 499.0h7.1M541.4 495.5v7.1"/><path d="M546.6 413.2q0 4.1 4.1 4.1q-4.1 0 -4.1 4.1q0 -4.1 -4.1 -4.1q4.1 0 4.1 -4.1z"/><rect x="495.1" y="240.0" width="10.9" height="3.6" rx="1.8" transform="rotate(0 500.5 241.9)"/><circle cx="354.7" cy="230.1" r="2.9"/><path d="M580.2 383.5h4.4M582.4 381.3v4.4"/><circle cx="756.8" cy="28.2" r="2.2"/><circle cx="518.0" cy="120.8" r="1.7"/><circle cx="184.6" cy="195.3" r="1.7"/><circle cx="304.4" cy="425.2" r="1.9"/><circle cx="841.9" cy="32.9" r="2.1"/><circle cx="171.8" cy="276.8" r="2.6"/><circle cx="37.2" cy="362.7" r="2.5"/><circle cx="411.9" cy="367.1" r="3.0"/><circle cx="230.0" cy="135.9" r="2.2"/><path d="M143.3 553.3q0 3.2 3.2 3.2q-3.2 0 -3.2 3.2q0 -3.2 -3.2 -3.2q3.2 0 3.2 -3.2z"/><circle cx="14.7" cy="480.4" r="2.1"/><circle cx="787.3" cy="118.9" r="2.0"/><path d="M408.1 379.6q0 2.2 2.2 2.2q-2.2 0 -2.2 2.2q0 -2.2 -2.2 -2.2q2.2 0 2.2 -2.2z"/><circle cx="501.0" cy="105.0" r="2.5"/><circle cx="715.6" cy="260.9" r="1.7"/><circle cx="412.5" cy="519.3" r="1.9"/><circle cx="453.8" cy="126.6" r="2.7"/><circle cx="907.1" cy="90.0" r="2.9"/><path d="M754.0 526.2h5.4M756.7 523.5v5.4"/><path d="M706.1 141.2h6.1M709.2 138.2v6.1"/><circle cx="203.8" cy="75.8" r="2.0"/><circle cx="73.9" cy="548.5" r="2.0"/><path d="M555.1 419.0h6.9M558.6 415.5v6.9"/><circle cx="326.9" cy="232.5" r="1.9"/><path d="M285.1 423.1h7.4M288.8 419.4v7.4"/><path d="M503.4 177.2h5.4M506.0 174.5v5.4"/><path d="M236.2 379.5q0 2.4 2.4 2.4q-2.4 0 -2.4 2.4q0 -2.4 -2.4 -2.4q2.4 0 2.4 -2.4z"/><rect x="76.1" y="115.7" width="13.6" height="4.5" rx="2.3" transform="rotate(0 82.9 118.0)"/><path d="M768.4 121.9h7.7M772.3 118.1v7.7"/><rect x="231.1" y="164.0" width="10.6" height="3.5" rx="1.8" transform="rotate(-20 236.4 165.7)"/><path d="M230.9 513.6h7.3M234.6 510.0v7.3"/><circle cx="433.0" cy="373.1" r="3.3"/><path d="M481.6 520.1h8.9M486.1 515.7v8.9"/><circle cx="644.7" cy="50.2" r="2.7"/><circle cx="190.8" cy="100.1" r="3.0"/><circle cx="192.3" cy="48.4" r="2.6"/><circle cx="623.2" cy="481.9" r="2.1"/><rect x="373.3" y="381.1" width="15.3" height="5.1" rx="2.6" transform="rotate(90 381.0 383.6)"/><rect x="486.7" y="113.0" width="15.9" height="5.3" rx="2.7" transform="rotate(0 494.7 115.6)"/><rect x="505.4" y="68.3" width="11.5" height="3.8" rx="1.9" transform="rotate(0 511.1 70.2)"/><path d="M333.7 301.2q0 2.5 2.5 2.5q-2.5 0 -2.5 2.5q0 -2.5 -2.5 -2.5q2.5 0 2.5 -2.5z"/><circle cx="651.6" cy="422.6" r="3.3"/><path d="M437.8 167.7h8.3M442.0 163.5v8.3"/><circle cx="633.7" cy="416.4" r="1.7"/><circle cx="229.4" cy="414.1" r="1.9"/><rect x="498.2" y="80.5" width="9.0" height="3.0" rx="1.5" transform="rotate(0 502.7 82.0)"/><circle cx="771.7" cy="485.9" r="1.8"/><circle cx="827.0" cy="137.0" r="2.8"/><circle cx="507.7" cy="325.9" r="2.7"/><path d="M792.3 276.1h8.6M796.5 271.8v8.6"/><circle cx="607.4" cy="158.4" r="1.7"/><circle cx="819.9" cy="219.6" r="2.8"/><circle cx="840.8" cy="130.8" r="2.0"/><path d="M280.7 211.5h5.8M283.6 208.6v5.8"/><circle cx="14.3" cy="40.5" r="1.9"/><circle cx="772.5" cy="494.6" r="1.7"/><circle cx="908.5" cy="369.2" r="3.2"/><path d="M813.3 198.6h6.7M816.7 195.2v6.7"/><circle cx="237.4" cy="151.4" r="2.2"/><path d="M920.0 34.7h5.5M922.7 32.0v5.5"/><path d="M235.6 395.8q0 3.9 3.9 3.9q-3.9 0 -3.9 3.9q0 -3.9 -3.9 -3.9q3.9 0 3.9 -3.9z"/><circle cx="604.0" cy="66.2" r="2.5"/><circle cx="859.2" cy="29.0" r="1.7"/><path d="M535.6 380.3q0 2.6 2.6 2.6q-2.6 0 -2.6 2.6q0 -2.6 -2.6 -2.6q2.6 0 2.6 -2.6z"/><circle cx="659.6" cy="432.0" r="3.1"/><circle cx="197.1" cy="23.2" r="2.9"/><path d="M331.9 18.6h8.4M336.1 14.4v8.4"/><rect x="703.9" y="428.0" width="12.3" height="4.1" rx="2.0" transform="rotate(20 710.0 430.0)"/><circle cx="33.2" cy="86.4" r="2.0"/><path d="M880.7 102.3h6.0M883.7 99.3v6.0"/><path d="M530.6 488.8q0 2.5 2.5 2.5q-2.5 0 -2.5 2.5q0 -2.5 -2.5 -2.5q2.5 0 2.5 -2.5z"/><circle cx="711.5" cy="492.4" r="2.7"/><path d="M194.3 121.9q0 2.7 2.7 2.7q-2.7 0 -2.7 2.7q0 -2.7 -2.7 -2.7q2.7 0 2.7 -2.7z"/><circle cx="156.1" cy="430.8" r="2.0"/><circle cx="723.5" cy="478.5" r="2.2"/><path d="M322.2 300.6q0 3.1 3.1 3.1q-3.1 0 -3.1 3.1q0 -3.1 -3.1 -3.1q3.1 0 3.1 -3.1z"/><circle cx="485.8" cy="266.6" r="3.1"/><path d="M25.9 474.6h7.2M29.5 471.0v7.2"/><path d="M119.9 230.4q0 3.5 3.5 3.5q-3.5 0 -3.5 3.5q0 -3.5 -3.5 -3.5q3.5 0 3.5 -3.5z"/><circle cx="735.6" cy="250.3" r="1.9"/><circle cx="602.0" cy="176.4" r="3.2"/><path d="M508.9 269.2h6.8M512.4 265.8v6.8"/><circle cx="95.2" cy="412.3" r="3.0"/><circle cx="295.0" cy="338.0" r="2.0"/><circle cx="497.0" cy="512.4" r="3.2"/><path d="M844.5 391.1h5.7M847.3 388.3v5.7"/><circle cx="221.1" cy="180.5" r="2.3"/><path d="M314.1 29.5h7.0M317.5 26.0v7.0"/><rect x="832.4" y="383.5" width="11.0" height="3.7" rx="1.8" transform="rotate(20 837.9 385.3)"/><path d="M444.4 386.0h4.5M446.6 383.8v4.5"/><circle cx="92.9" cy="458.2" r="2.2"/><path d="M879.1 184.1q0 2.4 2.4 2.4q-2.4 0 -2.4 2.4q0 -2.4 -2.4 -2.4q2.4 0 2.4 -2.4z"/><path d="M563.9 502.9h5.3M566.6 500.3v5.3"/><path d="M40.1 306.9h5.1M42.7 304.3v5.1"/><circle cx="816.7" cy="439.3" r="1.9"/><path d="M50.2 501.6h5.0M52.7 499.1v5.0"/><rect x="706.4" y="510.3" width="11.8" height="3.9" rx="2.0" transform="rotate(0 712.3 512.3)"/><path d="M245.5 395.7h4.6M247.8 393.4v4.6"/><circle cx="747.2" cy="299.7" r="3.1"/><path d="M414.5 207.5h8.2M418.6 203.4v8.2"/><circle cx="44.0" cy="299.3" r="2.0"/><path d="M606.4 484.8q0 3.0 3.0 3.0q-3.0 0 -3.0 3.0q0 -3.0 -3.0 -3.0q3.0 0 3.0 -3.0z"/><rect x="611.0" y="64.0" width="10.3" height="3.4" rx="1.7" transform="rotate(20 616.1 65.7)"/><path d="M517.6 321.1q0 3.5 3.5 3.5q-3.5 0 -3.5 3.5q0 -3.5 -3.5 -3.5q3.5 0 3.5 -3.5z"/><path d="M424.3 276.7h8.0M428.3 272.7v8.0"/><circle cx="224.8" cy="303.5" r="1.8"/><circle cx="497.5" cy="265.9" r="2.9"/><circle cx="18.3" cy="25.5" r="3.2"/><circle cx="646.6" cy="510.5" r="2.4"/><circle cx="664.7" cy="536.9" r="2.8"/><path d="M639.7 546.7h6.3M642.8 543.6v6.3"/><rect x="219.6" y="311.0" width="10.0" height="3.3" rx="1.7" transform="rotate(20 224.6 312.7)"/><path d="M41.0 285.4q0 3.0 3.0 3.0q-3.0 0 -3.0 3.0q0 -3.0 -3.0 -3.0q3.0 0 3.0 -3.0z"/><rect x="917.8" y="528.0" width="10.3" height="3.4" rx="1.7" transform="rotate(0 923.0 529.7)"/><circle cx="46.5" cy="479.8" r="2.8"/><path d="M877.9 450.0q0 4.1 4.1 4.1q-4.1 0 -4.1 4.1q0 -4.1 -4.1 -4.1q4.1 0 4.1 -4.1z"/><circle cx="650.2" cy="532.5" r="1.7"/><path d="M731.4 273.7h5.7M734.3 270.9v5.7"/><path d="M579.4 170.6q0 2.6 2.6 2.6q-2.6 0 -2.6 2.6q0 -2.6 -2.6 -2.6q2.6 0 2.6 -2.6z"/><path d="M420.0 291.9h6.0M423.0 288.9v6.0"/><path d="M482.7 123.9q0 3.5 3.5 3.5q-3.5 0 -3.5 3.5q0 -3.5 -3.5 -3.5q3.5 0 3.5 -3.5z"/><rect x="99.3" y="450.8" width="10.6" height="3.5" rx="1.8" transform="rotate(90 104.6 452.5)"/><path d="M390.8 556.5q0 4.3 4.3 4.3q-4.3 0 -4.3 4.3q0 -4.3 -4.3 -4.3q4.3 0 4.3 -4.3z"/><circle cx="121.7" cy="110.1" r="2.2"/><path d="M394.2 284.5q0 2.6 2.6 2.6q-2.6 0 -2.6 2.6q0 -2.6 -2.6 -2.6q2.6 0 2.6 -2.6z"/><circle cx="709.2" cy="254.0" r="2.9"/><circle cx="53.3" cy="70.9" r="2.8"/><circle cx="629.7" cy="203.8" r="2.2"/><path d="M378.8 187.8h4.5M381.1 185.5v4.5"/><circle cx="50.1" cy="554.9" r="2.4"/><rect x="34.2" y="493.5" width="9.5" height="3.2" rx="1.6" transform="rotate(90 38.9 495.1)"/><path d="M768.4 20.1q0 3.2 3.2 3.2q-3.2 0 -3.2 3.2q0 -3.2 -3.2 -3.2q3.2 0 3.2 -3.2z"/><path d="M191.2 183.0h7.6M195.0 179.2v7.6"/><path d="M460.4 549.7h8.6M464.7 545.4v8.6"/><path d="M749.0 313.8q0 3.7 3.7 3.7q-3.7 0 -3.7 3.7q0 -3.7 -3.7 -3.7q3.7 0 3.7 -3.7z"/><rect x="485.8" y="336.9" width="8.4" height="2.8" rx="1.4" transform="rotate(0 490.0 338.3)"/><circle cx="503.9" cy="193.8" r="2.7"/><circle cx="518.0" cy="506.7" r="2.1"/><rect x="92.5" y="526.3" width="12.8" height="4.3" rx="2.1" transform="rotate(0 98.8 528.5)"/><circle cx="865.9" cy="335.3" r="3.1"/><rect x="500.4" y="63.6" width="9.3" height="3.1" rx="1.6" transform="rotate(0 505.0 65.2)"/><rect x="410.7" y="532.6" width="10.8" height="3.6" rx="1.8" transform="rotate(0 416.1 534.4)"/><rect x="238.3" y="188.8" width="12.0" height="4.0" rx="2.0" transform="rotate(-20 244.3 190.8)"/><circle cx="475.0" cy="553.0" r="2.4"/><circle cx="496.3" cy="559.3" r="3.0"/><path d="M110.0 224.6h8.1M114.1 220.5v8.1"/><circle cx="244.8" cy="539.4" r="2.9"/><circle cx="420.8" cy="503.5" r="2.6"/><rect x="148.2" y="356.5" width="10.0" height="3.3" rx="1.7" transform="rotate(-20 153.2 358.1)"/><circle cx="419.3" cy="399.1" r="1.9"/><path d="M689.2 552.4h8.6M693.5 548.1v8.6"/><circle cx="771.4" cy="372.5" r="2.1"/><circle cx="840.2" cy="394.5" r="2.2"/><path d="M322.9 251.8h6.5M326.2 248.5v6.5"/><circle cx="424.8" cy="483.4" r="1.9"/><rect x="247.3" y="545.4" width="13.4" height="4.5" rx="2.2" transform="rotate(20 254.0 547.7)"/><circle cx="85.5" cy="404.9" r="3.3"/><circle cx="638.5" cy="486.4" r="1.7"/><path d="M521.9 433.2h5.2M524.5 430.6v5.2"/><path d="M612.2 31.8q0 2.9 2.9 2.9q-2.9 0 -2.9 2.9q0 -2.9 -2.9 -2.9q2.9 0 2.9 -2.9z"/><circle cx="254.5" cy="539.3" r="1.7"/><path d="M321.1 507.6q0 3.8 3.8 3.8q-3.8 0 -3.8 3.8q0 -3.8 -3.8 -3.8q3.8 0 3.8 -3.8z"/><path d="M887.3 352.3h6.9M890.8 348.8v6.9"/><path d="M720.9 142.5h6.9M724.4 139.0v6.9"/><circle cx="230.0" cy="198.0" r="3.3"/><circle cx="116.9" cy="206.2" r="3.1"/><circle cx="372.6" cy="241.6" r="2.4"/><path d="M63.7 273.0q0 4.3 4.3 4.3q-4.3 0 -4.3 4.3q0 -4.3 -4.3 -4.3q4.3 0 4.3 -4.3z"/><circle cx="405.3" cy="548.7" r="1.7"/><circle cx="755.4" cy="340.2" r="2.6"/><rect x="166.4" y="427.8" width="14.8" height="4.9" rx="2.5" transform="rotate(0 173.8 430.3)"/><circle cx="575.6" cy="370.5" r="1.7"/><rect x="293.3" y="343.9" width="9.2" height="3.1" rx="1.5" transform="rotate(0 297.9 345.5)"/><circle cx="113.7" cy="305.2" r="3.1"/><circle cx="425.0" cy="473.7" r="2.6"/><rect x="220.1" y="204.9" width="10.9" height="3.6" rx="1.8" transform="rotate(20 225.6 206.7)"/><path d="M672.9 422.3q0 4.3 4.3 4.3q-4.3 0 -4.3 4.3q0 -4.3 -4.3 -4.3q4.3 0 4.3 -4.3z"/><circle cx="568.1" cy="158.4" r="1.9"/><rect x="196.4" y="60.7" width="14.7" height="4.9" rx="2.4" transform="rotate(20 203.7 63.1)"/><circle cx="20.0" cy="369.9" r="1.8"/><path d="M803.7 498.5h5.6M806.5 495.7v5.6"/><rect x="869.1" y="232.1" width="11.7" height="3.9" rx="2.0" transform="rotate(-20 874.9 234.0)"/><circle cx="21.4" cy="100.7" r="1.7"/><path d="M772.0 474.9q0 2.3 2.3 2.3q-2.3 0 -2.3 2.3q0 -2.3 -2.3 -2.3q2.3 0 2.3 -2.3z"/><circle cx="714.8" cy="166.3" r="1.9"/><rect x="608.6" y="491.7" width="8.0" height="2.7" rx="1.3" transform="rotate(0 612.6 493.1)"/><path d="M515.8 421.7h4.8M518.2 419.3v4.8"/><path d="M214.0 299.9h6.4M217.1 296.7v6.4"/><rect x="808.6" y="315.5" width="11.0" height="3.7" rx="1.8" transform="rotate(20 814.1 317.3)"/><path d="M771.7 377.6q0 3.4 3.4 3.4q-3.4 0 -3.4 3.4q0 -3.4 -3.4 -3.4q3.4 0 3.4 -3.4z"/><circle cx="883.9" cy="287.3" r="2.1"/><circle cx="508.4" cy="101.6" r="1.9"/><path d="M567.3 311.4q0 2.2 2.2 2.2q-2.2 0 -2.2 2.2q0 -2.2 -2.2 -2.2q2.2 0 2.2 -2.2z"/><circle cx="722.2" cy="248.2" r="2.8"/><circle cx="313.8" cy="472.1" r="2.6"/><path d="M735.8 536.1h8.9M740.2 531.6v8.9"/><circle cx="273.1" cy="310.7" r="2.9"/><circle cx="394.4" cy="378.3" r="1.9"/><path d="M519.3 415.3h5.3M521.9 412.7v5.3"/><rect x="127.6" y="217.6" width="13.3" height="4.4" rx="2.2" transform="rotate(-20 134.2 219.8)"/><path d="M187.9 424.4h4.6M190.2 422.1v4.6"/><circle cx="436.4" cy="233.2" r="2.0"/><circle cx="417.6" cy="390.6" r="2.4"/><circle cx="919.7" cy="164.4" r="3.1"/><circle cx="348.1" cy="322.0" r="2.0"/><circle cx="433.0" cy="388.8" r="2.0"/><circle cx="525.3" cy="499.4" r="2.3"/><path d="M633.9 408.8h7.8M637.8 404.9v7.8"/><path d="M406.7 504.3q0 3.8 3.8 3.8q-3.8 0 -3.8 3.8q0 -3.8 -3.8 -3.8q3.8 0 3.8 -3.8z"/><path d="M523.9 486.1h4.4M526.1 483.9v4.4"/><path d="M631.6 132.0q0 4.4 4.4 4.4q-4.4 0 -4.4 4.4q0 -4.4 -4.4 -4.4q4.4 0 4.4 -4.4z"/><path d="M204.5 199.6h7.4M208.3 195.9v7.4"/><path d="M421.8 234.9h7.4M425.4 231.2v7.4"/><circle cx="843.2" cy="374.6" r="3.3"/><circle cx="6.5" cy="2.2" r="2.6"/><path d="M111.5 241.0q0 3.0 3.0 3.0q-3.0 0 -3.0 3.0q0 -3.0 -3.0 -3.0q3.0 0 3.0 -3.0z"/><circle cx="534.8" cy="305.5" r="2.8"/><path d="M375.4 455.3h6.8M378.9 451.9v6.8"/><circle cx="906.5" cy="178.5" r="2.4"/><circle cx="354.3" cy="344.6" r="2.6"/><circle cx="595.8" cy="100.3" r="2.8"/><path d="M320.3 526.5q0 2.4 2.4 2.4q-2.4 0 -2.4 2.4q0 -2.4 -2.4 -2.4q2.4 0 2.4 -2.4z"/><path d="M899.2 61.4h8.1M903.3 57.4v8.1"/><path d="M50.6 285.5q0 3.5 3.5 3.5q-3.5 0 -3.5 3.5q0 -3.5 -3.5 -3.5q3.5 0 3.5 -3.5z"/><path d="M214.9 69.8h8.6M219.2 65.5v8.6"/><circle cx="530.8" cy="282.1" r="1.8"/><path d="M624.7 195.2q0 2.3 2.3 2.3q-2.3 0 -2.3 2.3q0 -2.3 -2.3 -2.3q2.3 0 2.3 -2.3z"/><path d="M109.5 102.5q0 4.4 4.4 4.4q-4.4 0 -4.4 4.4q0 -4.4 -4.4 -4.4q4.4 0 4.4 -4.4z"/><path d="M897.1 105.8h8.1M901.2 101.7v8.1"/><path d="M181.2 173.4q0 4.1 4.1 4.1q-4.1 0 -4.1 4.1q0 -4.1 -4.1 -4.1q4.1 0 4.1 -4.1z"/><rect x="811.2" y="130.9" width="10.3" height="3.4" rx="1.7" transform="rotate(20 816.3 132.6)"/><circle cx="101.1" cy="185.8" r="3.2"/><circle cx="589.5" cy="171.5" r="2.8"/><circle cx="626.7" cy="539.7" r="3.0"/><rect x="476.8" y="320.7" width="9.1" height="3.0" rx="1.5" transform="rotate(90 481.4 322.2)"/><circle cx="288.5" cy="97.5" r="2.4"/><path d="M76.0 130.6h7.5M79.8 126.8v7.5"/><path d="M592.1 491.2h5.7M594.9 488.4v5.7"/><path d="M79.5 286.5q0 3.6 3.6 3.6q-3.6 0 -3.6 3.6q0 -3.6 -3.6 -3.6q3.6 0 3.6 -3.6z"/><circle cx="166.2" cy="322.8" r="3.1"/><circle cx="706.8" cy="483.3" r="2.1"/><circle cx="464.4" cy="395.6" r="1.9"/><rect x="153.3" y="561.3" width="13.0" height="4.3" rx="2.2" transform="rotate(0 159.8 563.4)"/><path d="M336.4 242.1h7.1M339.9 238.5v7.1"/><path d="M799.6 126.7h6.5M802.8 123.5v6.5"/><rect x="71.6" y="540.1" width="8.7" height="2.9" rx="1.5" transform="rotate(90 75.9 541.5)"/><circle cx="880.4" cy="346.8" r="2.0"/><path d="M621.4 65.0h7.4M625.1 61.3v7.4"/><circle cx="876.1" cy="177.8" r="2.6"/><circle cx="103.2" cy="169.8" r="2.0"/><circle cx="275.9" cy="281.9" r="3.2"/><circle cx="65.5" cy="546.4" r="3.0"/><path d="M402.6 387.9q0 4.3 4.3 4.3q-4.3 0 -4.3 4.3q0 -4.3 -4.3 -4.3q4.3 0 4.3 -4.3z"/><path d="M236.0 20.6h7.6M239.8 16.8v7.6"/><rect x="219.1" y="186.6" width="10.5" height="3.5" rx="1.8" transform="rotate(90 224.3 188.4)"/><circle cx="370.4" cy="39.5" r="2.0"/><path d="M509.1 424.6q0 4.1 4.1 4.1q-4.1 0 -4.1 4.1q0 -4.1 -4.1 -4.1q4.1 0 4.1 -4.1z"/><path d="M782.2 554.6q0 3.7 3.7 3.7q-3.7 0 -3.7 3.7q0 -3.7 -3.7 -3.7q3.7 0 3.7 -3.7z"/><path d="M923.0 355.2q0 3.1 3.1 3.1q-3.1 0 -3.1 3.1q0 -3.1 -3.1 -3.1q3.1 0 3.1 -3.1z"/><path d="M705.5 441.1h6.7M708.9 437.7v6.7"/><circle cx="354.9" cy="131.4" r="1.9"/><rect x="733.6" y="321.6" width="13.8" height="4.6" rx="2.3" transform="rotate(0 740.5 323.9)"/><circle cx="786.4" cy="287.4" r="1.9"/><circle cx="570.7" cy="179.1" r="2.8"/><path d="M699.6 267.5h6.3M702.7 264.4v6.3"/><circle cx="675.5" cy="543.7" r="3.4"/><circle cx="265.2" cy="98.8" r="2.4"/><rect x="896.4" y="464.8" width="15.4" height="5.1" rx="2.6" transform="rotate(90 904.1 467.4)"/><circle cx="445.8" cy="178.2" r="1.8"/><rect x="686.7" y="253.1" width="8.0" height="2.7" rx="1.3" transform="rotate(0 690.7 254.4)"/><circle cx="702.1" cy="156.0" r="2.9"/><circle cx="915.1" cy="183.4" r="1.7"/><rect x="912.1" y="149.3" width="10.8" height="3.6" rx="1.8" transform="rotate(0 917.5 151.0)"/><rect x="823.6" y="535.5" width="11.9" height="4.0" rx="2.0" transform="rotate(-20 829.5 537.5)"/><circle cx="523.6" cy="198.9" r="2.8"/><circle cx="492.1" cy="240.9" r="1.9"/><circle cx="799.8" cy="30.8" r="1.8"/><circle cx="406.0" cy="413.3" r="1.9"/><circle cx="498.2" cy="97.4" r="1.9"/><circle cx="287.5" cy="339.0" r="2.0"/><rect x="848.4" y="98.8" width="10.3" height="3.4" rx="1.7" transform="rotate(-20 853.6 100.5)"/><rect x="147.9" y="411.2" width="10.2" height="3.4" rx="1.7" transform="rotate(-20 153.0 412.9)"/><path d="M3.8 363.8q0 2.3 2.3 2.3q-2.3 0 -2.3 2.3q0 -2.3 -2.3 -2.3q2.3 0 2.3 -2.3z"/><path d="M580.0 229.5h8.0M583.9 225.5v8.0"/><circle cx="183.0" cy="530.2" r="2.8"/><circle cx="319.3" cy="483.1" r="1.9"/><path d="M453.1 396.1q0 3.9 3.9 3.9q-3.9 0 -3.9 3.9q0 -3.9 -3.9 -3.9q3.9 0 3.9 -3.9z"/><path d="M161.1 345.5q0 2.3 2.3 2.3q-2.3 0 -2.3 2.3q0 -2.3 -2.3 -2.3q2.3 0 2.3 -2.3z"/><rect x="589.5" y="375.8" width="9.4" height="3.1" rx="1.6" transform="rotate(-20 594.2 377.4)"/><rect x="768.5" y="540.2" width="9.7" height="3.2" rx="1.6" transform="rotate(20 773.3 541.8)"/><rect x="698.3" y="10.4" width="9.2" height="3.1" rx="1.5" transform="rotate(-20 702.9 12.0)"/><path d="M41.6 72.6q0 3.3 3.3 3.3q-3.3 0 -3.3 3.3q0 -3.3 -3.3 -3.3q3.3 0 3.3 -3.3z"/><circle cx="535.2" cy="122.8" r="2.3"/><circle cx="318.2" cy="463.1" r="2.5"/><circle cx="895.3" cy="546.0" r="3.0"/><circle cx="213.1" cy="339.7" r="2.4"/><rect x="799.0" y="285.0" width="13.8" height="4.6" rx="2.3" transform="rotate(0 805.9 287.3)"/><rect x="891.0" y="480.3" width="8.0" height="2.7" rx="1.3" transform="rotate(-20 895.0 481.6)"/><circle cx="75.0" cy="280.4" r="2.9"/><path d="M871.1 341.8q0 4.0 4.0 4.0q-4.0 0 -4.0 4.0q0 -4.0 -4.0 -4.0q4.0 0 4.0 -4.0z"/><path d="M618.5 187.2q0 3.0 3.0 3.0q-3.0 0 -3.0 3.0q0 -3.0 -3.0 -3.0q3.0 0 3.0 -3.0z"/><circle cx="264.0" cy="279.2" r="2.2"/><path d="M673.3 200.9q0 2.3 2.3 2.3q-2.3 0 -2.3 2.3q0 -2.3 -2.3 -2.3q2.3 0 2.3 -2.3z"/><circle cx="78.3" cy="260.1" r="2.9"/><rect x="562.1" y="433.4" width="15.1" height="5.0" rx="2.5" transform="rotate(90 569.7 435.9)"/><path d="M531.1 131.2q0 3.3 3.3 3.3q-3.3 0 -3.3 3.3q0 -3.3 -3.3 -3.3q3.3 0 3.3 -3.3z"/><path d="M544.7 3.6q0 3.3 3.3 3.3q-3.3 0 -3.3 3.3q0 -3.3 -3.3 -3.3q3.3 0 3.3 -3.3z"/><circle cx="31.6" cy="73.2" r="3.2"/><circle cx="574.0" cy="488.3" r="2.4"/><path d="M647.1 197.7q0 3.0 3.0 3.0q-3.0 0 -3.0 3.0q0 -3.0 -3.0 -3.0q3.0 0 3.0 -3.0z"/><circle cx="761.4" cy="9.0" r="1.7"/><circle cx="722.0" cy="522.6" r="2.7"/><path d="M526.4 207.1q0 4.2 4.2 4.2q-4.2 0 -4.2 4.2q0 -4.2 -4.2 -4.2q4.2 0 4.2 -4.2z"/><path d="M448.0 271.8h5.8M450.9 268.9v5.8"/><path d="M121.8 460.3q0 2.3 2.3 2.3q-2.3 0 -2.3 2.3q0 -2.3 -2.3 -2.3q2.3 0 2.3 -2.3z"/><circle cx="271.4" cy="107.5" r="2.8"/><circle cx="732.8" cy="264.3" r="2.1"/><circle cx="393.9" cy="393.8" r="1.8"/><circle cx="682.6" cy="554.1" r="3.2"/><circle cx="512.9" cy="450.1" r="2.2"/><circle cx="611.5" cy="181.8" r="1.9"/><circle cx="247.2" cy="523.2" r="2.4"/><path d="M160.1 88.6q0 3.2 3.2 3.2q-3.2 0 -3.2 3.2q0 -3.2 -3.2 -3.2q3.2 0 3.2 -3.2z"/><circle cx="662.5" cy="524.3" r="2.0"/><path d="M212.8 368.2h5.2M215.4 365.7v5.2"/><path d="M571.3 224.1h4.5M573.5 221.9v4.5"/><path d="M125.4 284.5h4.5M127.6 282.2v4.5"/><path d="M34.2 469.9h6.3M37.3 466.8v6.3"/><circle cx="908.3" cy="164.3" r="2.9"/><circle cx="555.4" cy="321.3" r="3.3"/><path d="M885.5 87.3h5.1M888.1 84.7v5.1"/><circle cx="554.5" cy="538.9" r="2.6"/><rect x="161.7" y="332.2" width="13.8" height="4.6" rx="2.3" transform="rotate(-20 168.5 334.5)"/><path d="M94.5 111.1h4.4M96.7 108.9v4.4"/><rect x="653.0" y="191.6" width="10.5" height="3.5" rx="1.7" transform="rotate(90 658.2 193.4)"/><path d="M480.7 239.8h6.2M483.8 236.7v6.2"/><circle cx="196.4" cy="12.4" r="2.4"/><path d="M12.0 98.8q0 2.8 2.8 2.8q-2.8 0 -2.8 2.8q0 -2.8 -2.8 -2.8q2.8 0 2.8 -2.8z"/><path d="M771.3 361.0q0 2.3 2.3 2.3q-2.3 0 -2.3 2.3q0 -2.3 -2.3 -2.3q2.3 0 2.3 -2.3z"/><circle cx="633.8" cy="259.4" r="2.4"/><circle cx="239.3" cy="526.2" r="1.9"/><rect x="91.9" y="297.4" width="16.1" height="5.4" rx="2.7" transform="rotate(90 99.9 300.0)"/><path d="M580.4 300.7q0 4.3 4.3 4.3q-4.3 0 -4.3 4.3q0 -4.3 -4.3 -4.3q4.3 0 4.3 -4.3z"/><path d="M208.2 125.8q0 3.0 3.0 3.0q-3.0 0 -3.0 3.0q0 -3.0 -3.0 -3.0q3.0 0 3.0 -3.0z"/><circle cx="406.4" cy="406.0" r="1.8"/><circle cx="68.0" cy="287.1" r="1.9"/><rect x="31.1" y="314.7" width="9.2" height="3.1" rx="1.5" transform="rotate(90 35.7 316.2)"/><rect x="358.1" y="55.9" width="11.4" height="3.8" rx="1.9" transform="rotate(-20 363.8 57.8)"/><circle cx="159.5" cy="50.5" r="3.4"/><path d="M911.7 353.4q0 3.4 3.4 3.4q-3.4 0 -3.4 3.4q0 -3.4 -3.4 -3.4q3.4 0 3.4 -3.4z"/><circle cx="839.6" cy="161.9" r="2.4"/><circle cx="434.1" cy="479.9" r="1.7"/><circle cx="505.6" cy="458.4" r="2.3"/><circle cx="200.5" cy="381.8" r="1.7"/><path d="M463.7 412.9h8.9M468.1 408.5v8.9"/><circle cx="114.3" cy="457.9" r="2.6"/><circle cx="757.3" cy="539.2" r="2.9"/><rect x="707.2" y="265.9" width="10.7" height="3.6" rx="1.8" transform="rotate(0 712.6 267.7)"/><circle cx="224.3" cy="59.3" r="3.1"/><path d="M221.0 423.3q0 3.9 3.9 3.9q-3.9 0 -3.9 3.9q0 -3.9 -3.9 -3.9q3.9 0 3.9 -3.9z"/><circle cx="862.0" cy="261.2" r="1.8"/><path d="M308.8 521.3h7.7M312.6 517.4v7.7"/><path d="M598.9 51.4h6.8M602.3 48.0v6.8"/><rect x="478.3" y="254.6" width="10.5" height="3.5" rx="1.8" transform="rotate(0 483.6 256.3)"/><path d="M290.9 2.9h5.0M293.4 0.4v5.0"/><path d="M766.7 528.3q0 4.1 4.1 4.1q-4.1 0 -4.1 4.1q0 -4.1 -4.1 -4.1q4.1 0 4.1 -4.1z"/><path d="M382.9 280.2q0 2.9 2.9 2.9q-2.9 0 -2.9 2.9q0 -2.9 -2.9 -2.9q2.9 0 2.9 -2.9z"/><circle cx="178.6" cy="97.4" r="1.8"/><path d="M439.8 254.6q0 3.5 3.5 3.5q-3.5 0 -3.5 3.5q0 -3.5 -3.5 -3.5q3.5 0 3.5 -3.5z"/><path d="M634.2 58.2q0 2.4 2.4 2.4q-2.4 0 -2.4 2.4q0 -2.4 -2.4 -2.4q2.4 0 2.4 -2.4z"/><rect x="792.0" y="288.1" width="9.3" height="3.1" rx="1.5" transform="rotate(0 796.7 289.6)"/><circle cx="314.0" cy="282.4" r="2.5"/><path d="M622.1 144.5q0 4.2 4.2 4.2q-4.2 0 -4.2 4.2q0 -4.2 -4.2 -4.2q4.2 0 4.2 -4.2z"/><path d="M348.5 110.8q0 4.2 4.2 4.2q-4.2 0 -4.2 4.2q0 -4.2 -4.2 -4.2q4.2 0 4.2 -4.2z"/><rect x="802.0" y="297.5" width="14.3" height="4.8" rx="2.4" transform="rotate(90 809.2 299.9)"/><path d="M18.2 270.5h8.5M22.5 266.2v8.5"/><circle cx="404.3" cy="157.7" r="1.9"/><circle cx="455.3" cy="388.7" r="2.0"/><rect x="745.3" y="529.7" width="9.6" height="3.2" rx="1.6" transform="rotate(-20 750.2 531.3)"/><circle cx="309.1" cy="37.6" r="2.8"/><path d="M147.0 364.5q0 4.0 4.0 4.0q-4.0 0 -4.0 4.0q0 -4.0 -4.0 -4.0q4.0 0 4.0 -4.0z"/><circle cx="826.1" cy="391.7" r="2.5"/><rect x="628.2" y="277.8" width="13.1" height="4.4" rx="2.2" transform="rotate(20 634.7 280.0)"/><circle cx="886.8" cy="546.3" r="1.7"/><circle cx="179.8" cy="336.3" r="3.4"/><circle cx="627.5" cy="493.2" r="3.0"/><circle cx="163.7" cy="425.9" r="2.6"/><circle cx="220.1" cy="380.9" r="2.8"/><circle cx="738.2" cy="311.8" r="2.7"/><circle cx="307.1" cy="19.2" r="2.0"/><path d="M159.2 510.8q0 2.6 2.6 2.6q-2.6 0 -2.6 2.6q0 -2.6 -2.6 -2.6q2.6 0 2.6 -2.6z"/><circle cx="623.5" cy="51.1" r="2.7"/><rect x="95.0" y="400.1" width="10.7" height="3.6" rx="1.8" transform="rotate(0 100.4 401.9)"/><circle cx="878.2" cy="413.3" r="2.6"/><path d="M145.4 496.4q0 3.7 3.7 3.7q-3.7 0 -3.7 3.7q0 -3.7 -3.7 -3.7q3.7 0 3.7 -3.7z"/><path d="M643.8 137.2q0 2.3 2.3 2.3q-2.3 0 -2.3 2.3q0 -2.3 -2.3 -2.3q2.3 0 2.3 -2.3z"/><circle cx="535.5" cy="406.8" r="2.1"/><circle cx="381.0" cy="497.1" r="2.4"/><path d="M879.8 429.4h4.7M882.1 427.0v4.7"/><path d="M760.3 481.6h6.8M763.7 478.2v6.8"/><circle cx="14.9" cy="122.2" r="1.9"/><path d="M-1.8 112.9h6.4M1.4 109.7v6.4"/><path d="M385.9 288.0q0 3.5 3.5 3.5q-3.5 0 -3.5 3.5q0 -3.5 -3.5 -3.5q3.5 0 3.5 -3.5z"/><circle cx="768.1" cy="350.0" r="1.9"/><circle cx="190.4" cy="4.7" r="1.9"/><circle cx="96.7" cy="441.0" r="2.0"/><circle cx="87.8" cy="452.8" r="1.7"/><circle cx="365.5" cy="46.3" r="2.3"/><rect x="408.0" y="490.8" width="14.1" height="4.7" rx="2.3" transform="rotate(0 415.1 493.1)"/><circle cx="493.9" cy="327.1" r="2.2"/><circle cx="620.3" cy="158.8" r="1.9"/><rect x="410.2" y="285.1" width="9.1" height="3.0" rx="1.5" transform="rotate(0 414.7 286.6)"/><path d="M191.2 31.4q0 4.4 4.4 4.4q-4.4 0 -4.4 4.4q0 -4.4 -4.4 -4.4q4.4 0 4.4 -4.4z"/><circle cx="549.9" cy="522.7" r="2.0"/><circle cx="775.9" cy="133.6" r="2.8"/><path d="M602.1 39.7h4.5M604.3 37.5v4.5"/><circle cx="0.4" cy="222.9" r="3.3"/><circle cx="686.1" cy="369.9" r="1.8"/><path d="M224.7 432.6q0 3.2 3.2 3.2q-3.2 0 -3.2 3.2q0 -3.2 -3.2 -3.2q3.2 0 3.2 -3.2z"/><path d="M613.6 167.5q0 3.9 3.9 3.9q-3.9 0 -3.9 3.9q0 -3.9 -3.9 -3.9q3.9 0 3.9 -3.9z"/><circle cx="575.2" cy="378.0" r="2.2"/><circle cx="491.1" cy="538.5" r="2.0"/><rect x="407.8" y="541.3" width="9.3" height="3.1" rx="1.5" transform="rotate(0 412.5 542.8)"/><circle cx="311.6" cy="371.1" r="1.8"/><circle cx="641.4" cy="208.6" r="2.0"/><circle cx="296.7" cy="95.1" r="1.9"/><rect x="358.8" y="545.0" width="11.9" height="4.0" rx="2.0" transform="rotate(-20 364.7 546.9)"/><circle cx="777.2" cy="287.2" r="1.9"/><circle cx="68.9" cy="65.2" r="1.9"/><circle cx="754.4" cy="124.9" r="3.0"/><circle cx="515.3" cy="335.3" r="2.9"/><circle cx="547.0" cy="426.6" r="1.8"/><path d="M922.9 133.5q0 3.9 3.9 3.9q-3.9 0 -3.9 3.9q0 -3.9 -3.9 -3.9q3.9 0 3.9 -3.9z"/><circle cx="756.7" cy="15.6" r="2.1"/><rect x="103.9" y="176.8" width="12.7" height="4.2" rx="2.1" transform="rotate(-20 110.3 178.9)"/><path d="M38.4 350.7h7.4M42.0 347.0v7.4"/><rect x="777.2" y="28.4" width="12.8" height="4.3" rx="2.1" transform="rotate(-20 783.6 30.6)"/><rect x="709.1" y="1.9" width="9.1" height="3.0" rx="1.5" transform="rotate(0 713.6 3.4)"/><path d="M693.8 330.8q0 3.1 3.1 3.1q-3.1 0 -3.1 3.1q0 -3.1 -3.1 -3.1q3.1 0 3.1 -3.1z"/><circle cx="143.2" cy="221.7" r="2.2"/><circle cx="151.2" cy="506.6" r="1.9"/><circle cx="30.1" cy="485.7" r="2.3"/><circle cx="867.4" cy="14.6" r="2.1"/><rect x="103.3" y="318.6" width="9.1" height="3.0" rx="1.5" transform="rotate(-20 107.9 320.1)"/><circle cx="489.4" cy="197.7" r="1.8"/><path d="M862.9 23.0h5.8M865.8 20.1v5.8"/><path d="M758.7 292.4q0 3.4 3.4 3.4q-3.4 0 -3.4 3.4q0 -3.4 -3.4 -3.4q3.4 0 3.4 -3.4z"/><circle cx="575.6" cy="166.7" r="1.9"/><circle cx="743.6" cy="280.2" r="1.9"/><circle cx="322.3" cy="262.7" r="2.7"/><circle cx="493.7" cy="460.9" r="2.5"/><path d="M623.9 471.0q0 2.6 2.6 2.6q-2.6 0 -2.6 2.6q0 -2.6 -2.6 -2.6q2.6 0 2.6 -2.6z"/><path d="M585.3 152.7q0 3.3 3.3 3.3q-3.3 0 -3.3 3.3q0 -3.3 -3.3 -3.3q3.3 0 3.3 -3.3z"/><circle cx="217.2" cy="209.0" r="2.4"/><circle cx="866.1" cy="356.0" r="2.0"/><rect x="218.3" y="131.9" width="8.5" height="2.8" rx="1.4" transform="rotate(90 222.6 133.3)"/><circle cx="17.9" cy="243.2" r="1.8"/><circle cx="562.9" cy="509.4" r="2.0"/><circle cx="628.4" cy="269.2" r="2.5"/><circle cx="360.3" cy="504.7" r="1.7"/><rect x="357.5" y="227.1" width="16.0" height="5.3" rx="2.7" transform="rotate(0 365.5 229.8)"/><path d="M911.5 466.0h4.9M913.9 463.6v4.9"/><circle cx="715.8" cy="473.2" r="2.6"/><circle cx="530.8" cy="290.7" r="3.1"/><circle cx="695.6" cy="5.7" r="1.9"/><circle cx="795.1" cy="123.3" r="1.8"/><circle cx="844.9" cy="103.2" r="2.2"/><circle cx="275.9" cy="98.0" r="2.5"/><rect x="614.9" y="38.0" width="11.9" height="4.0" rx="2.0" transform="rotate(0 620.8 40.0)"/><circle cx="484.5" cy="535.6" r="1.7"/><circle cx="613.7" cy="24.9" r="2.5"/><path d="M895.5 82.9h5.8M898.5 79.9v5.8"/><path d="M503.6 110.3q0 2.5 2.5 2.5q-2.5 0 -2.5 2.5q0 -2.5 -2.5 -2.5q2.5 0 2.5 -2.5z"/><path d="M336.5 403.8h5.9M339.4 400.9v5.9"/><circle cx="246.5" cy="380.1" r="1.9"/><path d="M712.7 152.8h7.9M716.7 148.9v7.9"/><circle cx="357.1" cy="355.2" r="2.1"/><circle cx="216.6" cy="196.4" r="2.2"/><path d="M68.0 127.8h5.8M70.9 124.9v5.8"/><circle cx="512.2" cy="195.5" r="1.7"/><path d="M634.8 497.5h5.4M637.5 494.8v5.4"/><circle cx="208.1" cy="182.5" r="2.6"/><circle cx="136.7" cy="402.8" r="3.0"/><path d="M222.3 251.6q0 2.7 2.7 2.7q-2.7 0 -2.7 2.7q0 -2.7 -2.7 -2.7q2.7 0 2.7 -2.7z"/><circle cx="355.7" cy="65.5" r="3.0"/><circle cx="444.8" cy="156.4" r="2.4"/><path d="M246.5 553.6q0 3.3 3.3 3.3q-3.3 0 -3.3 3.3q0 -3.3 -3.3 -3.3q3.3 0 3.3 -3.3z"/><circle cx="547.3" cy="507.1" r="1.8"/><circle cx="901.5" cy="244.2" r="1.8"/><circle cx="495.8" cy="81.3" r="1.7"/><rect x="564.1" y="147.4" width="13.3" height="4.4" rx="2.2" transform="rotate(0 570.7 149.6)"/><rect x="16.7" y="107.6" width="12.0" height="4.0" rx="2.0" transform="rotate(90 22.7 109.6)"/><path d="M222.7 372.3h5.9M225.6 369.3v5.9"/><path d="M730.0 281.5h4.8M732.5 279.1v4.8"/><circle cx="882.7" cy="477.3" r="2.3"/><rect x="841.2" y="121.3" width="9.0" height="3.0" rx="1.5" transform="rotate(20 845.7 122.7)"/><path d="M227.1 181.8h8.2M231.2 177.7v8.2"/><path d="M109.1 324.6q0 2.7 2.7 2.7q-2.7 0 -2.7 2.7q0 -2.7 -2.7 -2.7q2.7 0 2.7 -2.7z"/><circle cx="234.4" cy="432.7" r="3.1"/><path d="M626.0 401.6h4.5M628.3 399.4v4.5"/><rect x="271.2" y="411.9" width="12.2" height="4.1" rx="2.0" transform="rotate(90 277.3 413.9)"/><path d="M426.5 263.3h5.8M429.4 260.4v5.8"/><circle cx="541.4" cy="316.2" r="3.1"/><path d="M679.6 105.3h4.9M682.1 102.8v4.9"/><path d="M921.1 514.6q0 2.4 2.4 2.4q-2.4 0 -2.4 2.4q0 -2.4 -2.4 -2.4q2.4 0 2.4 -2.4z"/><circle cx="646.0" cy="39.3" r="2.2"/><circle cx="396.5" cy="438.2" r="2.2"/><circle cx="159.9" cy="415.7" r="1.9"/><circle cx="812.2" cy="274.7" r="2.5"/><circle cx="231.0" cy="68.1" r="1.8"/><circle cx="206.4" cy="54.5" r="2.1"/><path d="M522.2 312.6h7.8M526.1 308.7v7.8"/><circle cx="706.4" cy="502.1" r="1.9"/><circle cx="164.4" cy="269.3" r="3.2"/><rect x="497.8" y="254.7" width="12.3" height="4.1" rx="2.0" transform="rotate(0 503.9 256.8)"/><path d="M773.6 353.2h7.0M777.1 349.7v7.0"/><circle cx="329.3" cy="294.9" r="3.3"/><circle cx="347.1" cy="351.5" r="1.8"/><path d="M434.8 272.7h5.3M437.5 270.1v5.3"/><circle cx="405.4" cy="287.1" r="3.3"/><circle cx="172.4" cy="345.8" r="2.9"/><path d="M324.3 25.9h4.9M326.8 23.5v4.9"/><circle cx="490.7" cy="69.1" r="2.2"/><rect x="51.7" y="193.0" width="11.3" height="3.8" rx="1.9" transform="rotate(-20 57.3 194.9)"/><rect x="484.9" y="251.0" width="15.5" height="5.2" rx="2.6" transform="rotate(20 492.7 253.6)"/><path d="M144.8 39.3q0 2.2 2.2 2.2q-2.2 0 -2.2 2.2q0 -2.2 -2.2 -2.2q2.2 0 2.2 -2.2z"/><circle cx="524.7" cy="274.9" r="2.2"/><circle cx="270.6" cy="319.3" r="2.2"/><circle cx="652.6" cy="518.0" r="2.4"/><circle cx="451.5" cy="137.7" r="2.8"/><path d="M630.9 478.4q0 2.2 2.2 2.2q-2.2 0 -2.2 2.2q0 -2.2 -2.2 -2.2q2.2 0 2.2 -2.2z"/><circle cx="790.6" cy="497.5" r="1.8"/><circle cx="360.7" cy="361.9" r="1.9"/><circle cx="329.7" cy="223.3" r="2.4"/><rect x="492.0" y="62.3" width="9.7" height="3.2" rx="1.6" transform="rotate(20 496.8 63.9)"/><circle cx="143.8" cy="510.0" r="1.9"/><path d="M65.2 73.5q0 4.2 4.2 4.2q-4.2 0 -4.2 4.2q0 -4.2 -4.2 -4.2q4.2 0 4.2 -4.2z"/><circle cx="179.1" cy="266.8" r="3.0"/><circle cx="903.6" cy="478.7" r="2.2"/><path d="M273.0 288.3q0 3.4 3.4 3.4q-3.4 0 -3.4 3.4q0 -3.4 -3.4 -3.4q3.4 0 3.4 -3.4z"/><circle cx="175.3" cy="165.1" r="2.4"/><rect x="221.8" y="510.3" width="8.0" height="2.7" rx="1.3" transform="rotate(90 225.8 511.6)"/><circle cx="419.8" cy="224.4" r="1.9"/><path d="M570.4 494.5q0 2.2 2.2 2.2q-2.2 0 -2.2 2.2q0 -2.2 -2.2 -2.2q2.2 0 2.2 -2.2z"/><rect x="825.4" y="480.1" width="10.4" height="3.5" rx="1.7" transform="rotate(-20 830.6 481.8)"/><path d="M884.3 459.1q0 4.3 4.3 4.3q-4.3 0 -4.3 4.3q0 -4.3 -4.3 -4.3q4.3 0 4.3 -4.3z"/><path d="M629.0 336.2q0 3.0 3.0 3.0q-3.0 0 -3.0 3.0q0 -3.0 -3.0 -3.0q3.0 0 3.0 -3.0z"/><path d="M638.7 284.8q0 4.0 4.0 4.0q-4.0 0 -4.0 4.0q0 -4.0 -4.0 -4.0q4.0 0 4.0 -4.0z"/><circle cx="770.6" cy="502.9" r="1.9"/><circle cx="114.8" cy="195.6" r="3.0"/><path d="M252.1 13.0q0 2.6 2.6 2.6q-2.6 0 -2.6 2.6q0 -2.6 -2.6 -2.6q2.6 0 2.6 -2.6z"/><path d="M762.6 34.3h6.6M765.9 31.0v6.6"/><path d="M634.9 547.8q0 2.4 2.4 2.4q-2.4 0 -2.4 2.4q0 -2.4 -2.4 -2.4q2.4 0 2.4 -2.4z"/><circle cx="577.6" cy="440.4" r="2.0"/><rect x="554.7" y="494.0" width="12.9" height="4.3" rx="2.2" transform="rotate(0 561.1 496.2)"/><circle cx="707.0" cy="455.8" r="1.7"/><circle cx="659.1" cy="545.2" r="1.8"/><circle cx="921.8" cy="128.7" r="1.8"/><circle cx="361.7" cy="450.8" r="1.9"/><path d="M475.9 271.4h4.9M478.4 268.9v4.9"/><circle cx="402.8" cy="430.4" r="2.2"/><circle cx="108.5" cy="525.9" r="2.1"/><path d="M581.6 498.6h4.8M584.0 496.2v4.8"/><path d="M389.0 364.4h5.5M391.7 361.6v5.5"/><circle cx="399.3" cy="149.2" r="2.7"/><path d="M546.6 100.7h4.9M549.1 98.3v4.9"/><circle cx="787.7" cy="134.1" r="2.4"/><circle cx="483.4" cy="208.2" r="2.1"/><circle cx="199.1" cy="478.6" r="2.2"/><circle cx="39.5" cy="503.2" r="1.9"/><circle cx="419.0" cy="273.8" r="1.7"/><circle cx="609.4" cy="378.8" r="2.5"/><path d="M706.9 465.0q0 3.6 3.6 3.6q-3.6 0 -3.6 3.6q0 -3.6 -3.6 -3.6q3.6 0 3.6 -3.6z"/><circle cx="559.0" cy="429.1" r="2.4"/><circle cx="356.1" cy="139.8" r="2.3"/><path d="M321.3 111.4q0 2.5 2.5 2.5q-2.5 0 -2.5 2.5q0 -2.5 -2.5 -2.5q2.5 0 2.5 -2.5z"/><path d="M254.2 448.1q0 3.0 3.0 3.0q-3.0 0 -3.0 3.0q0 -3.0 -3.0 -3.0q3.0 0 3.0 -3.0z"/><circle cx="215.4" cy="131.5" r="1.9"/><path d="M397.8 563.5h4.5M400.0 561.2v4.5"/><circle cx="568.6" cy="368.3" r="1.7"/><path d="M834.7 137.3h4.5M836.9 135.1v4.5"/><circle cx="250.1" cy="78.1" r="1.9"/><rect x="38.3" y="560.8" width="14.8" height="4.9" rx="2.5" transform="rotate(90 45.6 563.2)"/><circle cx="642.6" cy="258.7" r="2.6"/><circle cx="693.5" cy="425.8" r="1.9"/><rect x="770.1" y="548.3" width="11.1" height="3.7" rx="1.9" transform="rotate(0 775.7 550.2)"/><circle cx="700.5" cy="251.8" r="1.7"/><circle cx="769.2" cy="290.7" r="3.0"/><circle cx="368.2" cy="370.3" r="2.4"/><circle cx="209.8" cy="507.9" r="2.3"/><circle cx="510.1" cy="439.4" r="2.5"/><circle cx="651.7" cy="405.1" r="1.8"/><circle cx="895.9" cy="470.8" r="1.9"/><circle cx="691.2" cy="43.8" r="2.8"/><circle cx="914.4" cy="528.7" r="1.8"/><path d="M606.3 79.3h5.5M609.1 76.6v5.5"/><rect x="856.1" y="99.0" width="14.1" height="4.7" rx="2.3" transform="rotate(0 863.1 101.4)"/><path d="M539.0 113.3q0 2.2 2.2 2.2q-2.2 0 -2.2 2.2q0 -2.2 -2.2 -2.2q2.2 0 2.2 -2.2z"/><circle cx="27.9" cy="372.6" r="1.9"/><rect x="53.6" y="553.8" width="13.3" height="4.4" rx="2.2" transform="rotate(20 60.2 556.0)"/><circle cx="504.4" cy="50.6" r="3.3"/><path d="M853.7 105.6q0 2.2 2.2 2.2q-2.2 0 -2.2 2.2q0 -2.2 -2.2 -2.2q2.2 0 2.2 -2.2z"/><rect x="178.8" y="427.4" width="9.1" height="3.0" rx="1.5" transform="rotate(0 183.4 428.9)"/><path d="M229.5 146.4h4.4M231.7 144.2v4.4"/><path d="M434.6 182.7h6.2M437.7 179.6v6.2"/><path d="M149.1 513.6q0 2.6 2.6 2.6q-2.6 0 -2.6 2.6q0 -2.6 -2.6 -2.6q2.6 0 2.6 -2.6z"/><path d="M512.0 187.7h4.7M514.4 185.4v4.7"/><path d="M428.2 255.0h4.7M430.5 252.7v4.7"/><circle cx="507.2" cy="92.1" r="2.9"/><circle cx="203.7" cy="332.5" r="2.2"/><path d="M896.6 74.8h6.2M899.7 71.7v6.2"/><circle cx="419.2" cy="376.0" r="2.2"/><path d="M184.2 184.5q0 2.2 2.2 2.2q-2.2 0 -2.2 2.2q0 -2.2 -2.2 -2.2q2.2 0 2.2 -2.2z"/><circle cx="312.0" cy="534.0" r="2.0"/><path d="M752.3 40.7h7.3M756.0 37.1v7.3"/><circle cx="444.8" cy="379.3" r="2.1"/><rect x="190.8" y="87.8" width="10.7" height="3.6" rx="1.8" transform="rotate(20 196.2 89.6)"/><circle cx="193.4" cy="196.3" r="1.9"/><circle cx="390.0" cy="193.1" r="2.6"/><path d="M389.8 167.8q0 2.6 2.6 2.6q-2.6 0 -2.6 2.6q0 -2.6 -2.6 -2.6q2.6 0 2.6 -2.6z"/><circle cx="402.5" cy="364.4" r="2.6"/><circle cx="297.7" cy="281.6" r="2.1"/><rect x="326.0" y="241.7" width="8.8" height="2.9" rx="1.5" transform="rotate(-20 330.4 243.1)"/><circle cx="103.8" cy="460.6" r="1.8"/><path d="M394.1 445.7q0 2.3 2.3 2.3q-2.3 0 -2.3 2.3q0 -2.3 -2.3 -2.3q2.3 0 2.3 -2.3z"/><rect x="630.4" y="48.1" width="8.4" height="2.8" rx="1.4" transform="rotate(0 634.5 49.5)"/><path d="M828.6 398.1h6.4M831.8 394.9v6.4"/><path d="M120.8 299.1h5.0M123.3 296.6v5.0"/><circle cx="695.9" cy="57.3" r="1.9"/><circle cx="295.3" cy="143.7" r="1.8"/><rect x="679.5" y="196.3" width="9.4" height="3.1" rx="1.6" transform="rotate(0 684.2 197.9)"/><circle cx="790.3" cy="552.1" r="1.9"/><circle cx="873.3" cy="9.6" r="2.2"/><path d="M880.1 418.5q0 2.5 2.5 2.5q-2.5 0 -2.5 2.5q0 -2.5 -2.5 -2.5q2.5 0 2.5 -2.5z"/><path d="M203.2 118.2q0 2.9 2.9 2.9q-2.9 0 -2.9 2.9q0 -2.9 -2.9 -2.9q2.9 0 2.9 -2.9z"/><circle cx="105.7" cy="194.3" r="2.2"/><path d="M693.8 473.0h5.2M696.4 470.4v5.2"/><circle cx="855.1" cy="365.0" r="1.7"/><circle cx="891.6" cy="65.3" r="1.7"/><path d="M215.4 308.5q0 2.8 2.8 2.8q-2.8 0 -2.8 2.8q0 -2.8 -2.8 -2.8q2.8 0 2.8 -2.8z"/><rect x="421.8" y="461.8" width="9.8" height="3.3" rx="1.6" transform="rotate(90 426.7 463.4)"/><rect x="893.1" y="179.4" width="10.1" height="3.4" rx="1.7" transform="rotate(90 898.1 181.1)"/><circle cx="748.2" cy="332.8" r="2.8"/><rect x="885.8" y="179.9" width="9.4" height="3.1" rx="1.6" transform="rotate(0 890.5 181.5)"/><path d="M589.7 160.0q0 2.7 2.7 2.7q-2.7 0 -2.7 2.7q0 -2.7 -2.7 -2.7q2.7 0 2.7 -2.7z"/><circle cx="135.7" cy="107.1" r="2.7"/><rect x="597.3" y="86.4" width="10.9" height="3.6" rx="1.8" transform="rotate(90 602.7 88.3)"/><circle cx="69.7" cy="252.0" r="2.4"/><path d="M246.4 384.9q0 2.6 2.6 2.6q-2.6 0 -2.6 2.6q0 -2.6 -2.6 -2.6q2.6 0 2.6 -2.6z"/><path d="M12.4 536.1q0 2.4 2.4 2.4q-2.4 0 -2.4 2.4q0 -2.4 -2.4 -2.4q2.4 0 2.4 -2.4z"/><path d="M663.8 198.4q0 4.3 4.3 4.3q-4.3 0 -4.3 4.3q0 -4.3 -4.3 -4.3q4.3 0 4.3 -4.3z"/><path d="M401.1 370.0q0 3.4 3.4 3.4q-3.4 0 -3.4 3.4q0 -3.4 -3.4 -3.4q3.4 0 3.4 -3.4z"/><circle cx="252.9" cy="7.9" r="1.9"/><path d="M611.9 43.2q0 2.8 2.8 2.8q-2.8 0 -2.8 2.8q0 -2.8 -2.8 -2.8q2.8 0 2.8 -2.8z"/><rect x="503.7" y="510.5" width="8.8" height="2.9" rx="1.5" transform="rotate(0 508.1 511.9)"/><circle cx="389.3" cy="371.6" r="2.0"/><path d="M23.7 83.9q0 2.6 2.6 2.6q-2.6 0 -2.6 2.6q0 -2.6 -2.6 -2.6q2.6 0 2.6 -2.6z"/><circle cx="785.9" cy="110.7" r="2.3"/><rect x="502.9" y="39.9" width="8.0" height="2.7" rx="1.3" transform="rotate(90 506.9 41.2)"/><rect x="114.0" y="291.3" width="9.8" height="3.3" rx="1.6" transform="rotate(90 118.9 292.9)"/><path d="M13.5 13.3h5.5M16.2 10.5v5.5"/><rect x="868.6" y="95.4" width="8.8" height="2.9" rx="1.5" transform="rotate(0 873.1 96.8)"/><circle cx="129.1" cy="212.2" r="1.8"/><path d="M428.6 492.9h5.8M431.5 490.0v5.8"/><circle cx="556.1" cy="514.8" r="2.4"/><rect x="101.0" y="338.3" width="8.5" height="2.8" rx="1.4" transform="rotate(0 105.2 339.7)"/><circle cx="76.2" cy="270.8" r="2.2"/><path d="M101.2 312.0h6.2M104.2 308.9v6.2"/><circle cx="211.6" cy="77.8" r="2.4"/><path d="M369.6 502.3h5.6M372.4 499.4v5.6"/><path d="M768.6 15.0h7.9M772.5 11.1v7.9"/><circle cx="417.3" cy="459.1" r="1.8"/><circle cx="500.0" cy="75.6" r="1.7"/><circle cx="231.7" cy="389.6" r="3.0"/><rect x="463.4" y="122.3" width="11.9" height="4.0" rx="2.0" transform="rotate(0 469.4 124.3)"/><path d="M32.9 325.1h5.4M35.6 322.4v5.4"/><circle cx="76.0" cy="402.9" r="2.2"/><path d="M479.5 546.3h7.9M483.5 542.3v7.9"/><path d="M148.2 46.6q0 2.5 2.5 2.5q-2.5 0 -2.5 2.5q0 -2.5 -2.5 -2.5q2.5 0 2.5 -2.5z"/><path d="M389.5 153.8q0 4.4 4.4 4.4q-4.4 0 -4.4 4.4q0 -4.4 -4.4 -4.4q4.4 0 4.4 -4.4z"/><circle cx="359.3" cy="123.4" r="2.0"/><path d="M793.2 132.5h6.1M796.3 129.4v6.1"/><circle cx="357.9" cy="34.7" r="1.8"/><circle cx="321.7" cy="284.6" r="1.8"/><circle cx="533.6" cy="507.0" r="3.0"/><rect x="696.3" y="432.1" width="9.8" height="3.3" rx="1.6" transform="rotate(-20 701.1 433.7)"/><circle cx="766.9" cy="2.8" r="1.8"/><circle cx="521.3" cy="189.8" r="2.0"/><path d="M225.1 172.1h4.9M227.5 169.6v4.9"/><circle cx="763.8" cy="358.1" r="1.8"/><path d="M97.1 462.3q0 3.2 3.2 3.2q-3.2 0 -3.2 3.2q0 -3.2 -3.2 -3.2q3.2 0 3.2 -3.2z"/><rect x="204.9" y="497.8" width="8.5" height="2.8" rx="1.4" transform="rotate(20 209.2 499.3)"/><circle cx="487.3" cy="232.4" r="1.7"/><circle cx="432.8" cy="247.6" r="2.0"/><circle cx="145.9" cy="407.6" r="1.7"/><path d="M306.0 431.1q0 2.8 2.8 2.8q-2.8 0 -2.8 2.8q0 -2.8 -2.8 -2.8q2.8 0 2.8 -2.8z"/><circle cx="830.6" cy="371.9" r="2.7"/><path d="M181.9 42.7q0 2.6 2.6 2.6q-2.6 0 -2.6 2.6q0 -2.6 -2.6 -2.6q2.6 0 2.6 -2.6z"/><circle cx="476.8" cy="416.9" r="2.0"/><rect x="559.9" y="222.2" width="8.1" height="2.7" rx="1.4" transform="rotate(20 564.0 223.5)"/><circle cx="778.7" cy="489.8" r="2.2"/><rect x="524.3" y="411.3" width="9.4" height="3.1" rx="1.6" transform="rotate(0 528.9 412.9)"/><path d="M448.2 146.3h4.9M450.7 143.9v4.9"/><path d="M114.4 311.6q0 2.4 2.4 2.4q-2.4 0 -2.4 2.4q0 -2.4 -2.4 -2.4q2.4 0 2.4 -2.4z"/><rect x="25.2" y="60.5" width="11.0" height="3.7" rx="1.8" transform="rotate(0 30.7 62.4)"/><path d="M227.5 281.9h5.2M230.1 279.3v5.2"/><circle cx="765.5" cy="520.7" r="1.7"/><path d="M245.7 1.9q0 2.8 2.8 2.8q-2.8 0 -2.8 2.8q0 -2.8 -2.8 -2.8q2.8 0 2.8 -2.8z"/><rect x="154.4" y="328.6" width="9.8" height="3.3" rx="1.6" transform="rotate(20 159.3 330.2)"/><rect x="489.5" y="342.7" width="14.4" height="4.8" rx="2.4" transform="rotate(20 496.7 345.1)"/><circle cx="127.3" cy="292.3" r="2.0"/><rect x="340.7" y="232.0" width="11.5" height="3.8" rx="1.9" transform="rotate(-20 346.4 233.9)"/><circle cx="282.0" cy="327.2" r="2.3"/><rect x="891.1" y="360.3" width="15.9" height="5.3" rx="2.6" transform="rotate(0 899.0 362.9)"/><circle cx="915.1" cy="142.9" r="1.7"/><rect x="200.4" y="81.5" width="8.0" height="2.7" rx="1.3" transform="rotate(20 204.4 82.8)"/><circle cx="120.1" cy="216.6" r="2.4"/><circle cx="832.2" cy="461.8" r="1.8"/><path d="M529.4 398.3h6.7M532.8 394.9v6.7"/><circle cx="267.7" cy="558.6" r="2.0"/><path d="M347.7 552.5h4.5M349.9 550.2v4.5"/><circle cx="823.8" cy="127.5" r="1.8"/><path d="M894.5 97.6q0 2.5 2.5 2.5q-2.5 0 -2.5 2.5q0 -2.5 -2.5 -2.5q2.5 0 2.5 -2.5z"/><circle cx="647.0" cy="249.4" r="1.8"/><path d="M617.1 318.0h5.1M619.7 315.4v5.1"/><circle cx="38.9" cy="334.9" r="2.1"/><circle cx="306.7" cy="167.1" r="1.8"/></g></svg><!--/PATTERN-->
<!-- incoming bubble -->
<div class="abs" style="left:28px;top:99px;width:340px;height:332px;background:#2e2e2e;border-radius:0 0 6px 6px"></div>
<div class="abs" style="left:36px;top:105px;width:324px;height:181px;background:#fff;border-radius:5px 5px 0 0;overflow:hidden">
  <svg class="abs" style="left:0;top:0" width="324" height="181" viewBox="0 0 324 181">
    <defs>
      <filter id="b4" x="-50%" y="-50%" width="200%" height="200%"><feGaussianBlur stdDeviation="4"/></filter>
      <filter id="b2" x="-50%" y="-50%" width="200%" height="200%"><feGaussianBlur stdDeviation="2.2"/></filter>
      <filter id="b3" x="-50%" y="-50%" width="200%" height="200%"><feGaussianBlur stdDeviation="3"/></filter>
    </defs>
    <filter id="b5" x="-50%" y="-100%" width="200%" height="300%"><feGaussianBlur stdDeviation="4.5"/></filter>
    <g filter="url(#b5)" fill="#6a6a6a">
      <rect x="118" y="53" width="40" height="11" rx="5"/>
      <rect x="166" y="53" width="40" height="11" rx="5"/>
    </g>
    <g filter="url(#b3)" fill="#2a2a2a">
      <rect x="122" y="56" width="32" height="5" rx="2.5"/>
      <rect x="170" y="56" width="32" height="5" rx="2.5"/>
    </g>
    <g filter="url(#b4)" fill="#f0f0f0">
      <rect x="118" y="26" width="30" height="11" rx="5"/>
      <rect x="166" y="26" width="34" height="11" rx="5"/>
      <rect x="130" y="78" width="12" height="10" rx="5"/>
      <rect x="154" y="79" width="8" height="8" rx="4"/>
      <rect x="176" y="78" width="30" height="10" rx="5"/>
    </g>
    <g filter="url(#b3)" fill="#f4f4f4">
      <rect x="117" y="3" width="12" height="9" rx="4"/>
      <rect x="168" y="3" width="12" height="9" rx="4"/>
      <rect x="14" y="104" width="10" height="10" rx="5"/>
      <rect x="0" y="127" width="12" height="14" rx="6"/>
      <rect x="56" y="118" width="24" height="16" rx="8"/>
      <rect x="86" y="118" width="20" height="16" rx="8"/>
      <rect x="24" y="143" width="18" height="16" rx="8"/>
      <rect x="10" y="160" width="16" height="16" rx="8"/>
    </g>
    <defs>
      <radialGradient id="dk"><stop offset="0" stop-color="#111" stop-opacity="1"/><stop offset="0.25" stop-color="#333" stop-opacity="0.9"/><stop offset="0.6" stop-color="#777" stop-opacity="0.35"/><stop offset="1" stop-color="#fff" stop-opacity="0"/></radialGradient>
      <radialGradient id="lt"><stop offset="0" stop-color="#555" stop-opacity="1"/><stop offset="0.3" stop-color="#888" stop-opacity="0.8"/><stop offset="0.65" stop-color="#bbb" stop-opacity="0.3"/><stop offset="1" stop-color="#fff" stop-opacity="0"/></radialGradient>
    </defs>
    <g filter="url(#b4)">
      <circle cx="84.2" cy="135.8" r="7" fill="#707070"/>
      <circle cx="84.2" cy="161.8" r="8" fill="#5a5a5a"/>
      <circle cx="45" cy="161.8" r="7" fill="#b0b0b0"/>
    </g>
    <g filter="url(#b2)" stroke-linecap="round">
      <circle cx="84.2" cy="135.8" r="3" fill="#222"/>
      <circle cx="84.2" cy="161.8" r="3.5" fill="#111"/>
      <circle cx="45" cy="161.8" r="2.5" fill="#777"/>
      <path d="M84.2 130v11.6M78.4 135.8h11.6" stroke="#333" stroke-width="1.6"/>
      <path d="M84.2 155.5v12.6M77.9 161.8h14" stroke="#222" stroke-width="1.8"/>
    </g>
  </svg>
</div>
<div class="abs" style="left:36px;top:286px;width:324px;height:56px;background:#434343"></div>
<div class="abs" style="left:36px;top:342px;width:324px;height:1px;background:#363636"></div>
<div class="abs" style="left:36px;top:343px;width:324px;height:57px;background:#3e3e3e;border-radius:0 0 5px 5px"></div>
<svg class="abs" style="left:53px;top:300px" width="22" height="28" viewBox="0 0 22 28">
  <path d="M0.5 0.5 H15 L21.5 7 V27.5 H0.5Z" fill="#f4f4f4"/>
  <path d="M15 0.5 V7 H21.5Z" fill="#d8d8d8"/>
  <path d="M3 4h10M3 7h10M3 10h15" stroke="#e0e0e0" stroke-width="1"/>
  <rect x="0" y="13" width="22" height="10" fill="#e0001b"/>
  <text x="11" y="21.2" text-anchor="middle" font-family="Liberation Sans" font-size="8" fill="#fff" letter-spacing="0.6">PDF</text>
</svg>
<div class="abs msg" style="left:92px;top:297px;font-size:13.6px;color:#f0f0f0">ViewOneTimeTranDetailsForSingleEntry...</div>
<div class="abs msg" style="left:92px;top:313px;font-size:11.6px;color:#c9c9c9">138 KB, Microsoft Edge PDF Document</div>
<div class="abs" style="left:48px;top:355px;width:148px;height:32px;background:#4c4c4c;border-radius:5px"></div>
<div class="abs" style="left:200px;top:355px;width:148px;height:32px;background:#4c4c4c;border-radius:5px"></div>
<div class="abs msg" style="left:48px;top:362px;width:148px;text-align:center;color:#f0f0f0">Open</div>
<div class="abs msg" style="left:200px;top:362px;width:148px;text-align:center;color:#f0f0f0;letter-spacing:-0.25px">Save as<span style="letter-spacing:-1.1px">...</span></div>
<div class="abs msg" style="left:36px;top:406px;color:#f0f0f0;word-spacing:0.75px">Lark engineering payment confirmation</div>
<div class="abs time" style="left:339px;top:415px;color:#a9a9a9">14:38</div>
<!-- reaction -->
<svg class="abs" style="left:34px;top:420px" width="36" height="34" viewBox="34 420 36 34">
  <defs><linearGradient id="tu" x1="0" y1="0" x2="0.3" y2="1"><stop offset="0" stop-color="#ffd75a"/><stop offset="0.6" stop-color="#fbbd22"/><stop offset="1" stop-color="#f0a010"/></linearGradient></defs>
  <rect x="37.6" y="424.4" width="28.6" height="26" rx="12" fill="#2b2b2b" stroke="#3b3b3b" stroke-width="1"/>
  <path d="M44 437.5 C44 436 45.5 435.5 47 435.5 L49.5 434.5 C50.5 433.5 51 431.5 51.2 430.5 C51.5 429.5 53 429.5 53.3 430.8 C53.6 432.5 53.3 434.5 52.8 436 L57.5 436 C58.5 436 58.8 437 58.3 437.8 C58.8 438.3 58.8 439.4 58.2 439.9 C58.7 440.4 58.6 441.5 58 442 C58.3 442.6 58 443.6 57.2 443.8 L57 444.5 C56.8 445 56 445.2 55.5 445.2 L49 445.2 C47 445.2 45.5 444.8 44.5 443.8 Z" fill="url(#tu)"/>
  <path d="M52.8 438.4 H58.2 M52.8 440.6 H58.2 M52.8 442.8 H57.6" stroke="#d8890c" stroke-width="0.7"/>
  <path d="M52.7 436.2 V445" stroke="#e09412" stroke-width="0.7"/>
  <path d="M44.6 439 V443.5" stroke="#e8a020" stroke-width="0.9" opacity="0.7"/>
</svg>
<!-- outgoing 1 -->
<div class="abs" style="left:337px;top:462px;width:569px;height:145px;background:#035c4b;border-radius:7px 0 7px 7px"></div>
<svg class="abs" style="left:900px;top:460px" width="16" height="14" viewBox="900 460 16 14"><path d="M900 462 H911.2 Q912.6 462 911.8 463.2 L906 471.2 H900z" fill="#035c4b"/></svg>
<div class="abs msg" style="left:345px;top:468px;color:#f0f5f3">Dear Sir<br><span style="word-spacing:-0.11px">Thanks for your order. As suggested by you we are proceeding with same compression</span><br><span style="word-spacing:-0.36px">ratio &amp; thickness (1:6,&nbsp; 36/55&nbsp; , Die Thickness = 55 mm, Hole size= 6mm)</span><br><span style="word-spacing:-0.35px">Please make sure your feed formulation doesn’t changes after die supply as it may</span><br><span style="word-spacing:0.56px">hamper your production output &amp; pellet quality. Also if there is any chance of change in</span><br><span style="word-spacing:0.07px">feed formulation in upcoming days, then please discuss &amp; share your required die</span><br>specification within 2-3 working days from now.</div>
<div class="abs time" style="left:857px;top:591px">15:12</div>
<svg class="abs" style="left:886px;top:592px" width="14" height="10" viewBox="0 0 14 10"><path d="M1.4 4.4 L3.6 6.6 L7.6 0.6 M6.8 6.6 L12.4 0.6" fill="none" stroke="#9dbdb3" stroke-width="1.1" stroke-linecap="round" stroke-linejoin="round"/></svg>
<!-- outgoing 2 -->
<div class="abs" style="left:709px;top:609px;width:197px;height:31px;background:#035c4b;border-radius:7px"></div>
<div class="abs msg" style="left:717px;top:614px;color:#f0f5f3;word-spacing:0.8px">Kindly confirm it sir</div>
<div class="abs time" style="left:857px;top:624px">15:12</div>
<svg class="abs" style="left:886px;top:625px" width="14" height="10" viewBox="0 0 14 10"><path d="M1.4 4.4 L3.6 6.6 L7.6 0.6 M6.8 6.6 L12.4 0.6" fill="none" stroke="#9dbdb3" stroke-width="1.1" stroke-linecap="round" stroke-linejoin="round"/></svg>

<div id="compline" class="abs"></div>
<div id="composer" class="abs"></div>
<svg class="abs" style="left:10px;top:672px" width="80" height="30" viewBox="10 672 80 30">
  <circle cx="24" cy="686.9" r="7.6" fill="none" stroke="#ececec" stroke-width="1.2"/>
  <path d="M21.4 684.3 l0.45 0.9 0.9 0.4 -0.9 0.4 -0.45 0.9 -0.45 -0.9 -0.9 -0.4 0.9 -0.4z M26.6 684.3 l0.45 0.9 0.9 0.4 -0.9 0.4 -0.45 0.9 -0.45 -0.9 -0.9 -0.4 0.9 -0.4z" fill="#ececec" stroke="#ececec" stroke-width="0.5"/>
  <path d="M20.2 688.6 Q24 689.6 27.8 688.6 Q27 691.6 24 691.6 Q21 691.6 20.2 688.6z" fill="#e0e0e0"/>
  <path d="M61.3 687.6 L68.3 680.6 C69.8 679.1 72.2 679.1 73.3 680.6 C74.5 682 74.3 684 73 685.3 L64.8 693.1 C63.8 694.1 62.4 694 61.7 693.2 C61 692.4 61.1 691.1 62 690.3 L68.5 684" fill="none" stroke="#ececec" stroke-width="1.2" stroke-linecap="round" stroke-linejoin="round"/>
</svg>
<div class="abs" style="left:104px;top:678px;width:1px;height:19px;background:#e0e0e0"></div>
<div class="abs tx" style="left:105px;top:679px;font-size:13.6px;letter-spacing:-0.17px;color:#9c9c9c;white-space:nowrap">Type a message</div>
<svg class="abs" style="left:890px;top:672px" width="30" height="30" viewBox="890 672 30 30">
  <rect x="901.1" y="680.3" width="6" height="10.6" rx="3" fill="none" stroke="#ececec" stroke-width="1.3"/>
  <path d="M898.5 687.3 a5.6 5.6 0 0 0 11.2 0 M904.1 693 V696" fill="none" stroke="#ececec" stroke-width="1.3" stroke-linecap="round"/>
</svg>
<div id="tbline" class="abs"></div>
<div id="taskbar" class="abs"></div>
<svg class="abs" style="left:0;top:714px" width="923" height="46" viewBox="0 714 923 46">
  <defs>
    <linearGradient id="win" gradientUnits="userSpaceOnUse" x1="40" y1="726" x2="63" y2="749"><stop offset="0" stop-color="#8ad9fc"/><stop offset="0.5" stop-color="#3fb4f7"/><stop offset="1" stop-color="#0a8ae6"/></linearGradient>
    <linearGradient id="edge1" x1="0" y1="0" x2="1" y2="0.6"><stop offset="0" stop-color="#2fb0f2"/><stop offset="0.45" stop-color="#2cc2c8"/><stop offset="1" stop-color="#62e05a"/></linearGradient>
    <linearGradient id="edge2" x1="0" y1="0" x2="0.3" y2="1"><stop offset="0" stop-color="#1f8fe0"/><stop offset="1" stop-color="#1378d6"/></linearGradient>
    <linearGradient id="fold" x1="0" y1="0" x2="0" y2="1"><stop offset="0" stop-color="#ffd65c"/><stop offset="1" stop-color="#f5b400"/></linearGradient>
    <linearGradient id="outl" x1="0" y1="0" x2="1" y2="1"><stop offset="0" stop-color="#fff2a0"/><stop offset="1" stop-color="#f0a000"/></linearGradient>
    <linearGradient id="tvf" x1="0" y1="0" x2="1" y2="1"><stop offset="0" stop-color="#ffffff"/><stop offset="1" stop-color="#d8d8d8"/></linearGradient>
  </defs>
  <!-- windows -->
  <rect x="40" y="726" width="11" height="11" rx="1" fill="url(#win)"/>
  <rect x="52" y="726" width="11" height="11" rx="1" fill="url(#win)"/>
  <rect x="40" y="738" width="11" height="11" rx="1" fill="url(#win)"/>
  <rect x="52" y="738" width="11" height="11" rx="1" fill="url(#win)"/>
  <!-- search -->
  <circle cx="94.7" cy="736" r="8.6" fill="#4a484c" stroke="#e6e6e6" stroke-width="2"/>
  <path d="M100.8 742.2 L105.8 747.2" stroke="#e6e6e6" stroke-width="2.2" stroke-linecap="round"/>
  <!-- task view -->
  <rect x="128" y="732" width="18" height="16" rx="2" fill="#6b6b6b"/>
  <rect x="134" y="726" width="18" height="16" rx="2" fill="url(#tvf)" opacity="0.95"/>
  <rect x="134" y="732" width="12" height="10" fill="#a8a8a8" opacity="0.9"/>
  <!-- edge -->
  <circle cx="184" cy="737" r="12.2" fill="url(#edge2)"/>
  <path d="M171.9 735.5 C173 729 178 724.8 184 724.8 C190.7 724.8 196.2 730.3 196.2 737 C196.2 738.8 195.9 740.2 195.3 741.4 C192 742.2 188.2 741.8 186 740.3 C184.6 739.3 184.8 737.2 186.6 736.2 C188.2 735.3 187.8 732.8 185.2 731.5 C181 729.6 175.2 730.8 171.9 735.5Z" fill="url(#edge1)"/>
  <path d="M186.6 736.2 C184.8 737.2 184.6 739.3 186 740.3 C183.6 741.6 180.4 740.3 180.1 737.6 C179.9 735 182.2 733.2 184.6 733.6 C186.6 733.9 187.6 735.4 186.6 736.2Z" fill="#1c1a1e"/>
  <path d="M180.1 737.6 C180.4 742.6 184.2 746.8 189 746.8 C191.8 746.8 194 745 195.3 741.4 C192 742.6 188.4 742.6 185.8 741.6 C183.2 740.8 180.6 740 180.1 737.6Z" fill="#0e58b0"/>
  <path d="M185.8 740.9 C188.5 742.2 192.5 742.3 195.3 741.4" fill="none" stroke="#14304f" stroke-width="0.9"/>
  <rect x="181" y="753" width="6" height="3" rx="1.5" fill="#8c8c8c"/>
  <!-- folder -->
  <path d="M216 727.5 a1.5 1.5 0 0 1 1.5 -1.5 h7 l2.5 2.5 h12 a1.2 1.2 0 0 1 1.2 1.2 V731 H216z" fill="#e9a400"/>
  <rect x="216" y="729.5" width="24.2" height="18" rx="1" fill="url(#fold)"/>
  <rect x="220.2" y="740.6" width="14.8" height="7" rx="1.5" fill="#1e86d8"/>
  <rect x="223" y="742.5" width="9" height="1" fill="#1462b0"/>
  <rect x="225" y="753" width="6" height="3" rx="1.5" fill="#8c8c8c"/>
  <!-- whatsapp tile -->
  <rect x="252" y="717" width="40" height="40" rx="4" fill="#2e2c30"/>
  <path d="M263.3 741.8 L260.8 748.6 L267.8 745.9 A10.2 10.2 0 1 0 263.3 741.8 Z" fill="none" stroke="#2bd365" stroke-width="2.1" stroke-linejoin="round"/>
  <path d="M268.2 731.6 c-1.3 0.5 -1.8 1.8 -1.3 3.3 c1 3.2 3.5 5.9 6.6 7 c1.5 0.5 2.7 0 3.2 -1.1 c0.3 -0.6 0 -1.1 -0.5 -1.4 l-1.8 -0.9 c-0.5 -0.2 -0.9 -0.1 -1.2 0.3 l-0.6 0.7 c-1.6 -0.8 -2.9 -2.1 -3.6 -3.7 l0.7 -0.6 c0.4 -0.3 0.5 -0.8 0.3 -1.3 l-0.8 -1.8 c-0.2 -0.5 -0.5 -0.6 -1 -0.5z" fill="#2bd365"/>
  <circle cx="281.4" cy="728.3" r="9.3" fill="#ee7f62"/>
  <text x="281.6" y="732.6" text-anchor="middle" font-family="Liberation Sans" font-size="11.5" fill="#2a1410">13</text>
  <rect x="264" y="753" width="16" height="3" rx="1.5" fill="#f08468"/>
  <!-- outlook -->
  <path d="M304.2 728.5 a3.5 3.5 0 0 1 3.5 -3.5 H326 V746.9 H304.2z" fill="url(#outl)" stroke="#e39a10" stroke-width="0.8"/>
  <path d="M305.5 746 L311 740.5 L314 744 L322 738.8 L325.5 743 V746z" fill="#fffaf0"/>
  <path d="M313 742.5 L322 738.8 L325 742 L316 745.5z" fill="#ffffff"/>
  <ellipse cx="311.4" cy="734.4" rx="4.6" ry="6" fill="none" stroke="#e7760c" stroke-width="3"/>
  <path d="M310 731.5 q-1.5 2.5 0 5.5" stroke="#fff3c0" stroke-width="1.2" fill="none"/>
  <circle cx="322.5" cy="734.6" r="3.6" fill="#fff6d0" stroke="#f3c040" stroke-width="0.6"/>
  <path d="M321 733 l1.5 2.2 l2 -1.5" stroke="#d0702a" stroke-width="0.9" fill="none"/>
  <rect x="313" y="753" width="6" height="3" rx="1.5" fill="#8c8c8c"/>
  <!-- sticky -->
  <path d="M348.7 727.5 a1.5 1.5 0 0 1 1.5 -1.5 h19.6 a1.5 1.5 0 0 1 1.5 1.5 V737 L360.5 748 H350.2 a1.5 1.5 0 0 1 -1.5 -1.5z" fill="#ffd500"/>
  <path d="M360.5 748 V738.5 a1.5 1.5 0 0 1 1.5 -1.5 H371.3z" fill="#3c3c3c"/>
  <path d="M360.5 748 L371.3 737 V746.5 a1.5 1.5 0 0 1 -1.5 1.5z" fill="#e6b000"/>
  <!-- chrome -->
  <circle cx="404" cy="737" r="12.1" fill="#fcc22e"/>
  <path d="M404 731.1 H414.56 A12.1 12.1 0 0 0 393.3 730.2 L398.9 739.9 Z" fill="#e23f2f"/>
  <path d="M398.9 739.9 L393.3 730.2 A12.1 12.1 0 0 0 403.8 749.1 L409.1 739.95 Z" fill="#1f9a46"/>
  <circle cx="404" cy="737" r="5.9" fill="#ffffff"/>
  <circle cx="404" cy="737" r="4.8" fill="#2f7ae8"/>
  <rect x="401" y="753" width="6" height="3" rx="1.5" fill="#8c8c8c"/>
  <!-- excel -->
  <defs><linearGradient id="xlb" x1="0" y1="0" x2="1" y2="1"><stop offset="0" stop-color="#f2faf2"/><stop offset="0.6" stop-color="#bfe3bf"/><stop offset="1" stop-color="#6cc46c"/></linearGradient></defs>
  <path d="M436.2 728.5 a3.5 3.5 0 0 1 3.5 -3.5 H457.8 V746.7 H436.2z" fill="url(#xlb)" stroke="#1f7a24" stroke-width="0.9"/>
  <path d="M436.8 742 H457.2 V746.1 H436.8z" fill="#ffffff" opacity="0.85"/>
  <path d="M441 729 L448.5 740.5" stroke="#8ccd4a" stroke-width="3"/>
  <path d="M449 729 L440.5 740.5" stroke="#2a7a36" stroke-width="2.4"/>
  <path d="M450.5 736 L458.6 738.2 L457.2 745.6 L448.8 743.4z" fill="#f8fff8"/>
  <path d="M451 739 l6.5 1.8 M450.3 741.6 l6.5 1.8 M454 737.2 l-1.3 7" stroke="#6ab86a" stroke-width="0.7"/>
  <rect x="445" y="753" width="6" height="3" rx="1.5" fill="#8c8c8c"/>
  <!-- tray -->
  <path d="M697.5 739.5 L702.3 734.7 L707.1 739.5" fill="none" stroke="#f0f0f0" stroke-width="1.4" stroke-linecap="round" stroke-linejoin="round"/>
  <path d="M779.5 729.6 H772 a1.4 1.4 0 0 0 -1.4 1.4 V741.2 H782.2 M774.6 741.2 V744.3 M778.6 741.2 V744.3 M772.6 744.3 H782.2" fill="none" stroke="#f0f0f0" stroke-width="1.1"/>
  <rect x="781.1" y="729.6" width="4.8" height="6" rx="1.4" fill="none" stroke="#f0f0f0" stroke-width="1.1"/>
  <path d="M783.5 735.6 V745 M782.6 732.3 h1.8" stroke="#f0f0f0" stroke-width="1.1"/>
  <path d="M794.5 734.5 h2.5 l4 -3 v11 l-4 -3 h-2.5z" fill="none" stroke="#f0f0f0" stroke-width="1.1" stroke-linejoin="round"/>
  <path d="M803.5 734.5 l5 5 M808.5 734.5 l-5 5" stroke="#f0f0f0" stroke-width="1.1"/>
  <path d="M897.2 741.8 H911 L909.5 739.4 V735 C909.5 732 907.5 729.8 904.3 729.8 C901 729.8 898.8 732 898.8 735 V739.4Z" fill="#f4f4f4"/>
  <path d="M901.5 743 H906.5 C906.5 744.3 905.5 745 904 745 C902.5 745 901.5 744.3 901.5 743Z" fill="#f4f4f4"/>
  <rect x="906.3" y="728.6" width="6" height="6.2" fill="#381a23"/>
  <path d="M907.4 730.6 H910.8 L907.4 733.8 H910.8" fill="none" stroke="#f4f4f4" stroke-width="1.1"/>
  <path d="M902.4 733.8 H906.2 L902.4 737.9 H906.2" fill="none" stroke="#381a23" stroke-width="1.3"/>
</svg>
<div class="abs tx" style="left:720px;top:722px;width:60px;text-align:center;font-size:11px;line-height:16px;color:#f0f0f0;left:710px">ENG<br><span style="font-size:11.5px">IN</span></div>
<div class="abs tx" style="left:800px;top:721px;width:89px;text-align:right;font-size:11.6px;line-height:16px;color:#f0f0f0"><span style="letter-spacing:-0.12px">15:21:23</span><br><span style="letter-spacing:0.24px">29-10-2025</span></div>
</body></html>
